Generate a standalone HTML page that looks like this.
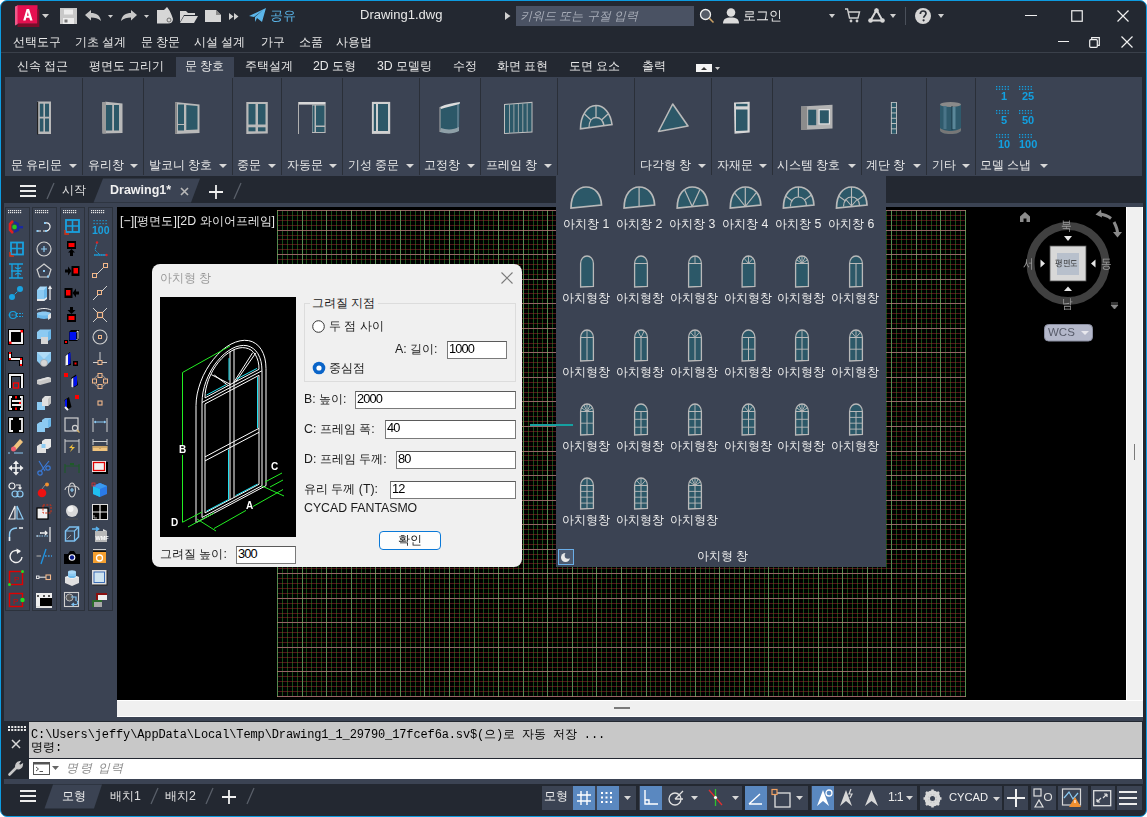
<!DOCTYPE html><html><head><meta charset='utf-8'><style>
*{margin:0;padding:0;box-sizing:border-box}
html,body{width:1147px;height:817px;overflow:hidden;background:#fff}
body{font-family:"Liberation Sans",sans-serif;font-size:12px;color:#e6e6e6;position:relative}
.a{position:absolute}
.t{position:absolute;white-space:pre;line-height:1}
#win{position:absolute;left:0;top:0;width:1147px;height:817px;background:#232831;border:1px solid #0d9be0;border-radius:7px;overflow:hidden}
svg{position:absolute;overflow:visible}
</style></head><body><div id='win'><div class='a' style='left:0px;top:51px;width:1146px;height:1px;background:#3a404a;'></div><div class='a' style='left:4px;top:76px;width:1137px;height:99px;background:#3b4353;'></div><div class='a' style='left:81px;top:77px;width:1px;height:97px;background:#2a2f38;'></div><div class='a' style='left:142px;top:77px;width:1px;height:97px;background:#2a2f38;'></div><div class='a' style='left:231px;top:77px;width:1px;height:97px;background:#2a2f38;'></div><div class='a' style='left:280px;top:77px;width:1px;height:97px;background:#2a2f38;'></div><div class='a' style='left:341px;top:77px;width:1px;height:97px;background:#2a2f38;'></div><div class='a' style='left:418px;top:77px;width:1px;height:97px;background:#2a2f38;'></div><div class='a' style='left:479px;top:77px;width:1px;height:97px;background:#2a2f38;'></div><div class='a' style='left:556px;top:77px;width:1px;height:97px;background:#2a2f38;'></div><div class='a' style='left:633px;top:77px;width:1px;height:97px;background:#2a2f38;'></div><div class='a' style='left:710px;top:77px;width:1px;height:97px;background:#2a2f38;'></div><div class='a' style='left:771px;top:77px;width:1px;height:97px;background:#2a2f38;'></div><div class='a' style='left:860px;top:77px;width:1px;height:97px;background:#2a2f38;'></div><div class='a' style='left:925px;top:77px;width:1px;height:97px;background:#2a2f38;'></div><div class='a' style='left:974px;top:77px;width:1px;height:97px;background:#2a2f38;'></div><div class='a' style='left:175px;top:56px;width:58px;height:20px;background:#3b4353;'></div><div class='a' style='left:3px;top:202px;width:1139px;height:518px;background:#3b4353;'></div><div class='a' style='left:4px;top:206px;width:25px;height:404px;background:#3b4353;border:1px solid #2c323c'></div><div class='a' style='left:31px;top:206px;width:25px;height:404px;background:#3b4353;border:1px solid #2c323c'></div><div class='a' style='left:59px;top:206px;width:25px;height:404px;background:#3b4353;border:1px solid #2c323c'></div><div class='a' style='left:87px;top:206px;width:25px;height:404px;background:#3b4353;border:1px solid #2c323c'></div><div class='a' style='left:116px;top:206px;width:1009px;height:493px;background:#000;'></div><div class='a' style='left:116px;top:699px;width:1026px;height:17px;background:#f0f0f0;border-top:1px solid #fff;border-bottom:1px solid #fff'></div><div class='a' style='left:1125px;top:206px;width:17px;height:493px;background:#f0f0f0;border-left:1px solid #fff;border-right:1px solid #fff'></div><div class='a' style='left:28px;top:721px;width:1113px;height:36px;background:#c8c8c8;'></div><div class='a' style='left:28px;top:758px;width:1113px;height:20px;background:#ffffff;'></div><div class='a' style='left:3px;top:778px;width:1139px;height:5px;background:#3b4353;'></div><svg style='left:-1px;top:-1px' width='1147' height='817' shape-rendering='crispEdges'><line x1='277' y1='696.5' x2='966' y2='696.5' stroke='#966464'/><line x1='277' y1='691.5' x2='966' y2='691.5' stroke='#501619'/><line x1='277' y1='686.5' x2='966' y2='686.5' stroke='#501619'/><line x1='277' y1='681.5' x2='966' y2='681.5' stroke='#501619'/><line x1='277' y1='676.5' x2='966' y2='676.5' stroke='#501619'/><line x1='277' y1='671.5' x2='966' y2='671.5' stroke='#966464'/><line x1='277' y1='667.5' x2='966' y2='667.5' stroke='#501619'/><line x1='277' y1='662.5' x2='966' y2='662.5' stroke='#501619'/><line x1='277' y1='657.5' x2='966' y2='657.5' stroke='#501619'/><line x1='277' y1='652.5' x2='966' y2='652.5' stroke='#501619'/><line x1='277' y1='647.5' x2='966' y2='647.5' stroke='#966464'/><line x1='277' y1='642.5' x2='966' y2='642.5' stroke='#501619'/><line x1='277' y1='637.5' x2='966' y2='637.5' stroke='#501619'/><line x1='277' y1='632.5' x2='966' y2='632.5' stroke='#501619'/><line x1='277' y1='627.5' x2='966' y2='627.5' stroke='#501619'/><line x1='277' y1='622.5' x2='966' y2='622.5' stroke='#966464'/><line x1='277' y1='617.5' x2='966' y2='617.5' stroke='#501619'/><line x1='277' y1='613.5' x2='966' y2='613.5' stroke='#501619'/><line x1='277' y1='608.5' x2='966' y2='608.5' stroke='#501619'/><line x1='277' y1='603.5' x2='966' y2='603.5' stroke='#501619'/><line x1='277' y1='598.5' x2='966' y2='598.5' stroke='#966464'/><line x1='277' y1='593.5' x2='966' y2='593.5' stroke='#501619'/><line x1='277' y1='588.5' x2='966' y2='588.5' stroke='#501619'/><line x1='277' y1='583.5' x2='966' y2='583.5' stroke='#501619'/><line x1='277' y1='578.5' x2='966' y2='578.5' stroke='#501619'/><line x1='277' y1='573.5' x2='966' y2='573.5' stroke='#966464'/><line x1='277' y1='568.5' x2='966' y2='568.5' stroke='#501619'/><line x1='277' y1='563.5' x2='966' y2='563.5' stroke='#501619'/><line x1='277' y1='559.5' x2='966' y2='559.5' stroke='#501619'/><line x1='277' y1='554.5' x2='966' y2='554.5' stroke='#501619'/><line x1='277' y1='549.5' x2='966' y2='549.5' stroke='#966464'/><line x1='277' y1='544.5' x2='966' y2='544.5' stroke='#501619'/><line x1='277' y1='539.5' x2='966' y2='539.5' stroke='#501619'/><line x1='277' y1='534.5' x2='966' y2='534.5' stroke='#501619'/><line x1='277' y1='529.5' x2='966' y2='529.5' stroke='#501619'/><line x1='277' y1='524.5' x2='966' y2='524.5' stroke='#966464'/><line x1='277' y1='519.5' x2='966' y2='519.5' stroke='#501619'/><line x1='277' y1='514.5' x2='966' y2='514.5' stroke='#501619'/><line x1='277' y1='509.5' x2='966' y2='509.5' stroke='#501619'/><line x1='277' y1='505.5' x2='966' y2='505.5' stroke='#501619'/><line x1='277' y1='500.5' x2='966' y2='500.5' stroke='#966464'/><line x1='277' y1='495.5' x2='966' y2='495.5' stroke='#501619'/><line x1='277' y1='490.5' x2='966' y2='490.5' stroke='#501619'/><line x1='277' y1='485.5' x2='966' y2='485.5' stroke='#501619'/><line x1='277' y1='480.5' x2='966' y2='480.5' stroke='#501619'/><line x1='277' y1='475.5' x2='966' y2='475.5' stroke='#966464'/><line x1='277' y1='470.5' x2='966' y2='470.5' stroke='#501619'/><line x1='277' y1='465.5' x2='966' y2='465.5' stroke='#501619'/><line x1='277' y1='460.5' x2='966' y2='460.5' stroke='#501619'/><line x1='277' y1='455.5' x2='966' y2='455.5' stroke='#501619'/><line x1='277' y1='451.5' x2='966' y2='451.5' stroke='#966464'/><line x1='277' y1='446.5' x2='966' y2='446.5' stroke='#501619'/><line x1='277' y1='441.5' x2='966' y2='441.5' stroke='#501619'/><line x1='277' y1='436.5' x2='966' y2='436.5' stroke='#501619'/><line x1='277' y1='431.5' x2='966' y2='431.5' stroke='#501619'/><line x1='277' y1='426.5' x2='966' y2='426.5' stroke='#966464'/><line x1='277' y1='421.5' x2='966' y2='421.5' stroke='#501619'/><line x1='277' y1='416.5' x2='966' y2='416.5' stroke='#501619'/><line x1='277' y1='411.5' x2='966' y2='411.5' stroke='#501619'/><line x1='277' y1='406.5' x2='966' y2='406.5' stroke='#501619'/><line x1='277' y1='401.5' x2='966' y2='401.5' stroke='#966464'/><line x1='277' y1='397.5' x2='966' y2='397.5' stroke='#501619'/><line x1='277' y1='392.5' x2='966' y2='392.5' stroke='#501619'/><line x1='277' y1='387.5' x2='966' y2='387.5' stroke='#501619'/><line x1='277' y1='382.5' x2='966' y2='382.5' stroke='#501619'/><line x1='277' y1='377.5' x2='966' y2='377.5' stroke='#966464'/><line x1='277' y1='372.5' x2='966' y2='372.5' stroke='#501619'/><line x1='277' y1='367.5' x2='966' y2='367.5' stroke='#501619'/><line x1='277' y1='362.5' x2='966' y2='362.5' stroke='#501619'/><line x1='277' y1='357.5' x2='966' y2='357.5' stroke='#501619'/><line x1='277' y1='352.5' x2='966' y2='352.5' stroke='#966464'/><line x1='277' y1='347.5' x2='966' y2='347.5' stroke='#501619'/><line x1='277' y1='343.5' x2='966' y2='343.5' stroke='#501619'/><line x1='277' y1='338.5' x2='966' y2='338.5' stroke='#501619'/><line x1='277' y1='333.5' x2='966' y2='333.5' stroke='#501619'/><line x1='277' y1='328.5' x2='966' y2='328.5' stroke='#966464'/><line x1='277' y1='323.5' x2='966' y2='323.5' stroke='#501619'/><line x1='277' y1='318.5' x2='966' y2='318.5' stroke='#501619'/><line x1='277' y1='313.5' x2='966' y2='313.5' stroke='#501619'/><line x1='277' y1='308.5' x2='966' y2='308.5' stroke='#501619'/><line x1='277' y1='303.5' x2='966' y2='303.5' stroke='#966464'/><line x1='277' y1='298.5' x2='966' y2='298.5' stroke='#501619'/><line x1='277' y1='293.5' x2='966' y2='293.5' stroke='#501619'/><line x1='277' y1='289.5' x2='966' y2='289.5' stroke='#501619'/><line x1='277' y1='284.5' x2='966' y2='284.5' stroke='#501619'/><line x1='277' y1='279.5' x2='966' y2='279.5' stroke='#966464'/><line x1='277' y1='274.5' x2='966' y2='274.5' stroke='#501619'/><line x1='277' y1='269.5' x2='966' y2='269.5' stroke='#501619'/><line x1='277' y1='264.5' x2='966' y2='264.5' stroke='#501619'/><line x1='277' y1='259.5' x2='966' y2='259.5' stroke='#501619'/><line x1='277' y1='254.5' x2='966' y2='254.5' stroke='#966464'/><line x1='277' y1='249.5' x2='966' y2='249.5' stroke='#501619'/><line x1='277' y1='244.5' x2='966' y2='244.5' stroke='#501619'/><line x1='277' y1='239.5' x2='966' y2='239.5' stroke='#501619'/><line x1='277' y1='235.5' x2='966' y2='235.5' stroke='#501619'/><line x1='277' y1='230.5' x2='966' y2='230.5' stroke='#966464'/><line x1='277' y1='225.5' x2='966' y2='225.5' stroke='#501619'/><line x1='277' y1='220.5' x2='966' y2='220.5' stroke='#501619'/><line x1='277' y1='215.5' x2='966' y2='215.5' stroke='#501619'/><line x1='277' y1='210.5' x2='966' y2='210.5' stroke='#966464'/></svg><svg style='left:-1px;top:-1px;mix-blend-mode:lighten' width='1147' height='817' shape-rendering='crispEdges'><line x1='277.5' y1='210' x2='277.5' y2='697' stroke='#558c50'/><line x1='282.5' y1='210' x2='282.5' y2='697' stroke='#184c18'/><line x1='287.5' y1='210' x2='287.5' y2='697' stroke='#184c18'/><line x1='292.5' y1='210' x2='292.5' y2='697' stroke='#184c18'/><line x1='297.5' y1='210' x2='297.5' y2='697' stroke='#184c18'/><line x1='302.5' y1='210' x2='302.5' y2='697' stroke='#558c50'/><line x1='306.5' y1='210' x2='306.5' y2='697' stroke='#184c18'/><line x1='311.5' y1='210' x2='311.5' y2='697' stroke='#184c18'/><line x1='316.5' y1='210' x2='316.5' y2='697' stroke='#184c18'/><line x1='321.5' y1='210' x2='321.5' y2='697' stroke='#184c18'/><line x1='326.5' y1='210' x2='326.5' y2='697' stroke='#558c50'/><line x1='331.5' y1='210' x2='331.5' y2='697' stroke='#184c18'/><line x1='336.5' y1='210' x2='336.5' y2='697' stroke='#184c18'/><line x1='341.5' y1='210' x2='341.5' y2='697' stroke='#184c18'/><line x1='346.5' y1='210' x2='346.5' y2='697' stroke='#184c18'/><line x1='351.5' y1='210' x2='351.5' y2='697' stroke='#558c50'/><line x1='356.5' y1='210' x2='356.5' y2='697' stroke='#184c18'/><line x1='361.5' y1='210' x2='361.5' y2='697' stroke='#184c18'/><line x1='365.5' y1='210' x2='365.5' y2='697' stroke='#184c18'/><line x1='370.5' y1='210' x2='370.5' y2='697' stroke='#184c18'/><line x1='375.5' y1='210' x2='375.5' y2='697' stroke='#558c50'/><line x1='380.5' y1='210' x2='380.5' y2='697' stroke='#184c18'/><line x1='385.5' y1='210' x2='385.5' y2='697' stroke='#184c18'/><line x1='390.5' y1='210' x2='390.5' y2='697' stroke='#184c18'/><line x1='395.5' y1='210' x2='395.5' y2='697' stroke='#184c18'/><line x1='400.5' y1='210' x2='400.5' y2='697' stroke='#558c50'/><line x1='405.5' y1='210' x2='405.5' y2='697' stroke='#184c18'/><line x1='410.5' y1='210' x2='410.5' y2='697' stroke='#184c18'/><line x1='415.5' y1='210' x2='415.5' y2='697' stroke='#184c18'/><line x1='420.5' y1='210' x2='420.5' y2='697' stroke='#184c18'/><line x1='424.5' y1='210' x2='424.5' y2='697' stroke='#558c50'/><line x1='429.5' y1='210' x2='429.5' y2='697' stroke='#184c18'/><line x1='434.5' y1='210' x2='434.5' y2='697' stroke='#184c18'/><line x1='439.5' y1='210' x2='439.5' y2='697' stroke='#184c18'/><line x1='444.5' y1='210' x2='444.5' y2='697' stroke='#184c18'/><line x1='449.5' y1='210' x2='449.5' y2='697' stroke='#558c50'/><line x1='454.5' y1='210' x2='454.5' y2='697' stroke='#184c18'/><line x1='459.5' y1='210' x2='459.5' y2='697' stroke='#184c18'/><line x1='464.5' y1='210' x2='464.5' y2='697' stroke='#184c18'/><line x1='469.5' y1='210' x2='469.5' y2='697' stroke='#184c18'/><line x1='474.5' y1='210' x2='474.5' y2='697' stroke='#558c50'/><line x1='478.5' y1='210' x2='478.5' y2='697' stroke='#184c18'/><line x1='483.5' y1='210' x2='483.5' y2='697' stroke='#184c18'/><line x1='488.5' y1='210' x2='488.5' y2='697' stroke='#184c18'/><line x1='493.5' y1='210' x2='493.5' y2='697' stroke='#184c18'/><line x1='498.5' y1='210' x2='498.5' y2='697' stroke='#558c50'/><line x1='503.5' y1='210' x2='503.5' y2='697' stroke='#184c18'/><line x1='508.5' y1='210' x2='508.5' y2='697' stroke='#184c18'/><line x1='513.5' y1='210' x2='513.5' y2='697' stroke='#184c18'/><line x1='518.5' y1='210' x2='518.5' y2='697' stroke='#184c18'/><line x1='523.5' y1='210' x2='523.5' y2='697' stroke='#558c50'/><line x1='528.5' y1='210' x2='528.5' y2='697' stroke='#184c18'/><line x1='533.5' y1='210' x2='533.5' y2='697' stroke='#184c18'/><line x1='537.5' y1='210' x2='537.5' y2='697' stroke='#184c18'/><line x1='542.5' y1='210' x2='542.5' y2='697' stroke='#184c18'/><line x1='547.5' y1='210' x2='547.5' y2='697' stroke='#558c50'/><line x1='552.5' y1='210' x2='552.5' y2='697' stroke='#184c18'/><line x1='557.5' y1='210' x2='557.5' y2='697' stroke='#184c18'/><line x1='562.5' y1='210' x2='562.5' y2='697' stroke='#184c18'/><line x1='567.5' y1='210' x2='567.5' y2='697' stroke='#184c18'/><line x1='572.5' y1='210' x2='572.5' y2='697' stroke='#558c50'/><line x1='577.5' y1='210' x2='577.5' y2='697' stroke='#184c18'/><line x1='582.5' y1='210' x2='582.5' y2='697' stroke='#184c18'/><line x1='587.5' y1='210' x2='587.5' y2='697' stroke='#184c18'/><line x1='592.5' y1='210' x2='592.5' y2='697' stroke='#184c18'/><line x1='596.5' y1='210' x2='596.5' y2='697' stroke='#558c50'/><line x1='601.5' y1='210' x2='601.5' y2='697' stroke='#184c18'/><line x1='606.5' y1='210' x2='606.5' y2='697' stroke='#184c18'/><line x1='611.5' y1='210' x2='611.5' y2='697' stroke='#184c18'/><line x1='616.5' y1='210' x2='616.5' y2='697' stroke='#184c18'/><line x1='621.5' y1='210' x2='621.5' y2='697' stroke='#558c50'/><line x1='626.5' y1='210' x2='626.5' y2='697' stroke='#184c18'/><line x1='631.5' y1='210' x2='631.5' y2='697' stroke='#184c18'/><line x1='636.5' y1='210' x2='636.5' y2='697' stroke='#184c18'/><line x1='641.5' y1='210' x2='641.5' y2='697' stroke='#184c18'/><line x1='646.5' y1='210' x2='646.5' y2='697' stroke='#558c50'/><line x1='650.5' y1='210' x2='650.5' y2='697' stroke='#184c18'/><line x1='655.5' y1='210' x2='655.5' y2='697' stroke='#184c18'/><line x1='660.5' y1='210' x2='660.5' y2='697' stroke='#184c18'/><line x1='665.5' y1='210' x2='665.5' y2='697' stroke='#184c18'/><line x1='670.5' y1='210' x2='670.5' y2='697' stroke='#558c50'/><line x1='675.5' y1='210' x2='675.5' y2='697' stroke='#184c18'/><line x1='680.5' y1='210' x2='680.5' y2='697' stroke='#184c18'/><line x1='685.5' y1='210' x2='685.5' y2='697' stroke='#184c18'/><line x1='690.5' y1='210' x2='690.5' y2='697' stroke='#184c18'/><line x1='695.5' y1='210' x2='695.5' y2='697' stroke='#558c50'/><line x1='700.5' y1='210' x2='700.5' y2='697' stroke='#184c18'/><line x1='705.5' y1='210' x2='705.5' y2='697' stroke='#184c18'/><line x1='709.5' y1='210' x2='709.5' y2='697' stroke='#184c18'/><line x1='714.5' y1='210' x2='714.5' y2='697' stroke='#184c18'/><line x1='719.5' y1='210' x2='719.5' y2='697' stroke='#558c50'/><line x1='724.5' y1='210' x2='724.5' y2='697' stroke='#184c18'/><line x1='729.5' y1='210' x2='729.5' y2='697' stroke='#184c18'/><line x1='734.5' y1='210' x2='734.5' y2='697' stroke='#184c18'/><line x1='739.5' y1='210' x2='739.5' y2='697' stroke='#184c18'/><line x1='744.5' y1='210' x2='744.5' y2='697' stroke='#558c50'/><line x1='749.5' y1='210' x2='749.5' y2='697' stroke='#184c18'/><line x1='754.5' y1='210' x2='754.5' y2='697' stroke='#184c18'/><line x1='759.5' y1='210' x2='759.5' y2='697' stroke='#184c18'/><line x1='764.5' y1='210' x2='764.5' y2='697' stroke='#184c18'/><line x1='768.5' y1='210' x2='768.5' y2='697' stroke='#558c50'/><line x1='773.5' y1='210' x2='773.5' y2='697' stroke='#184c18'/><line x1='778.5' y1='210' x2='778.5' y2='697' stroke='#184c18'/><line x1='783.5' y1='210' x2='783.5' y2='697' stroke='#184c18'/><line x1='788.5' y1='210' x2='788.5' y2='697' stroke='#184c18'/><line x1='793.5' y1='210' x2='793.5' y2='697' stroke='#558c50'/><line x1='798.5' y1='210' x2='798.5' y2='697' stroke='#184c18'/><line x1='803.5' y1='210' x2='803.5' y2='697' stroke='#184c18'/><line x1='808.5' y1='210' x2='808.5' y2='697' stroke='#184c18'/><line x1='813.5' y1='210' x2='813.5' y2='697' stroke='#184c18'/><line x1='818.5' y1='210' x2='818.5' y2='697' stroke='#558c50'/><line x1='822.5' y1='210' x2='822.5' y2='697' stroke='#184c18'/><line x1='827.5' y1='210' x2='827.5' y2='697' stroke='#184c18'/><line x1='832.5' y1='210' x2='832.5' y2='697' stroke='#184c18'/><line x1='837.5' y1='210' x2='837.5' y2='697' stroke='#184c18'/><line x1='842.5' y1='210' x2='842.5' y2='697' stroke='#558c50'/><line x1='847.5' y1='210' x2='847.5' y2='697' stroke='#184c18'/><line x1='852.5' y1='210' x2='852.5' y2='697' stroke='#184c18'/><line x1='857.5' y1='210' x2='857.5' y2='697' stroke='#184c18'/><line x1='862.5' y1='210' x2='862.5' y2='697' stroke='#184c18'/><line x1='867.5' y1='210' x2='867.5' y2='697' stroke='#558c50'/><line x1='872.5' y1='210' x2='872.5' y2='697' stroke='#184c18'/><line x1='877.5' y1='210' x2='877.5' y2='697' stroke='#184c18'/><line x1='881.5' y1='210' x2='881.5' y2='697' stroke='#184c18'/><line x1='886.5' y1='210' x2='886.5' y2='697' stroke='#184c18'/><line x1='891.5' y1='210' x2='891.5' y2='697' stroke='#558c50'/><line x1='896.5' y1='210' x2='896.5' y2='697' stroke='#184c18'/><line x1='901.5' y1='210' x2='901.5' y2='697' stroke='#184c18'/><line x1='906.5' y1='210' x2='906.5' y2='697' stroke='#184c18'/><line x1='911.5' y1='210' x2='911.5' y2='697' stroke='#184c18'/><line x1='916.5' y1='210' x2='916.5' y2='697' stroke='#558c50'/><line x1='921.5' y1='210' x2='921.5' y2='697' stroke='#184c18'/><line x1='926.5' y1='210' x2='926.5' y2='697' stroke='#184c18'/><line x1='931.5' y1='210' x2='931.5' y2='697' stroke='#184c18'/><line x1='936.5' y1='210' x2='936.5' y2='697' stroke='#184c18'/><line x1='940.5' y1='210' x2='940.5' y2='697' stroke='#558c50'/><line x1='945.5' y1='210' x2='945.5' y2='697' stroke='#184c18'/><line x1='950.5' y1='210' x2='950.5' y2='697' stroke='#184c18'/><line x1='955.5' y1='210' x2='955.5' y2='697' stroke='#184c18'/><line x1='960.5' y1='210' x2='960.5' y2='697' stroke='#184c18'/><line x1='965.5' y1='210' x2='965.5' y2='697' stroke='#558c50'/></svg><svg style='left:13px;top:3px;' width='27' height='24' viewBox='0 0 27 24'><path d='M1 2.5L4 1.2V20L1 21.5Z' fill='#ee5a8a'/><rect x='3.5' y='1.2' width='20' height='18.5' fill='#e51050'/><path d='M3.5 19.7H23.5V5L25.3 5.6V23H3.5Z' fill='#7c0c2a'/><path d='M9.2 16.5L12.6 5H15.1L18.6 16.5H16.1L15.3 13.8H12.3L11.6 16.5ZM12.9 11.7H14.8L13.85 8.1Z' fill='#fff'/></svg><svg style='left:41.0px;top:13.0px;' width='7' height='4' viewBox='0 0 7 4'><path d='M0 0H7L3.5 4Z' fill='#cfcfcf'/></svg><svg style='left:59px;top:7px;' width='17' height='16' viewBox='0 0 17 16'><path d='M0 0H17V16H0Z' fill='#c8c8c8'/><rect x='4' y='1.5' width='9' height='5' fill='#ececec'/><rect x='3' y='10' width='11' height='6' fill='#ececec'/><rect x='4.5' y='11.5' width='3' height='3' fill='#777'/></svg><svg style='left:83px;top:9px;' width='18' height='12' viewBox='0 0 18 12'><path d='M1 5L7 0V3C12 3 16 5 17 11C14 8 11 7.5 7 7.5V10.5Z' fill='#c8c8c8'/></svg><svg style='left:107.0px;top:13.5px;' width='5' height='3' viewBox='0 0 5 3'><path d='M0 0H5L2.5 3Z' fill='#cfcfcf'/></svg><svg style='left:119px;top:9px;' width='18' height='12' viewBox='0 0 18 12'><path d='M17 5L11 0V3C6 3 2 5 1 11C4 8 7 7.5 11 7.5V10.5Z' fill='#c8c8c8'/></svg><svg style='left:143.0px;top:13.5px;' width='5' height='3' viewBox='0 0 5 3'><path d='M0 0H5L2.5 3Z' fill='#cfcfcf'/></svg><svg style='left:155px;top:6px;' width='18' height='17' viewBox='0 0 18 17'><path d='M1 3H8L11 0C13 2 16 8 17 12C17 15 15 16.5 12 16.5H1Z' fill='#d6d6d6'/><circle cx='13' cy='13' r='2' fill='none' stroke='#555' stroke-width='0.8'/></svg><svg style='left:179px;top:9px;' width='18' height='13' viewBox='0 0 18 13'><path d='M0 1H6L8 3H15V5H4L0 12Z' fill='#d6d6d6'/><path d='M4 6H18L14 13H0Z' fill='#d6d6d6'/></svg><svg style='left:204px;top:9px;' width='16' height='12' viewBox='0 0 16 12'><path d='M0 0H11L16 5V12H0Z' fill='#d6d6d6'/><path d='M11 0V5H16' fill='#8a8a8a'/></svg><svg style='left:228px;top:12px;' width='10' height='7' viewBox='0 0 10 7'><path d='M0 0L4.5 3.5L0 7ZM5 0L9.5 3.5L5 7Z' fill='#d0d0d0'/></svg><svg style='left:248px;top:7px;' width='17' height='15' viewBox='0 0 17 15'><path d='M0 8L17 0L13 14L8 10L6 14V9L14 2L5 9Z' fill='#5bb6ea'/></svg><div class='t' style='left:269px;top:9px;font-size:12.5px;color:#5bb6ea;'>공유</div><div class='t' style='left:359px;top:7px;font-size:13px;color:#e8e8e8;'>Drawing1.dwg</div><svg style='left:504px;top:11px;' width='6' height='8' viewBox='0 0 6 8'><path d='M0 0L5.5 4L0 8Z' fill='#d0d0d0'/></svg><div class='a' style='left:515px;top:5px;width:178px;height:20px;background:#4a5263;'></div><div class='t' style='left:519px;top:9px;font-size:12px;color:#a8adb8;font-style:italic'>키워드 또는 구절 입력</div><svg style='left:698px;top:7px;' width='16' height='16' viewBox='0 0 16 16'><circle cx='6.5' cy='6.5' r='5' fill='#555b67' stroke='#f0f0f0' stroke-width='1.3'/><path d='M10.3 10.3L14.5 14.5' stroke='#c9a064' stroke-width='1.6'/></svg><svg style='left:721px;top:6px;' width='18' height='17' viewBox='0 0 18 17'><circle cx='9' cy='5.5' r='4.3' fill='#dcdcdc'/><path d='M1 16.5C1 12 4 10.5 9 10.5C14 10.5 17 12 17 16.5Z' fill='#dcdcdc'/></svg><div class='t' style='left:742px;top:9px;font-size:12.5px;color:#eaeaea;'>로그인</div><svg style='left:827.5px;top:13.0px;' width='6' height='4' viewBox='0 0 6 4'><path d='M0 0H6L3.0 4Z' fill='#cfcfcf'/></svg><svg style='left:844px;top:7px;' width='15' height='15' viewBox='0 0 15 15'><path d='M0 1H2.5L4.5 10H13L14.5 4H3.5' fill='none' stroke='#cfcfcf' stroke-width='1.4'/><circle cx='6' cy='13' r='1.4' fill='#cfcfcf'/><circle cx='12' cy='13' r='1.4' fill='#cfcfcf'/></svg><svg style='left:867px;top:7px;' width='17' height='15' viewBox='0 0 17 15'><path d='M8.5 2L2.5 12.5H14.5Z' fill='none' stroke='#d6d6d6' stroke-width='2'/><circle cx='8.5' cy='2.5' r='2.3' fill='#d6d6d6'/><circle cx='2.5' cy='12.5' r='2.3' fill='#d6d6d6'/><circle cx='14.5' cy='12.5' r='2.3' fill='#d6d6d6'/></svg><svg style='left:888.5px;top:13.0px;' width='6' height='4' viewBox='0 0 6 4'><path d='M0 0H6L3.0 4Z' fill='#cfcfcf'/></svg><div class='a' style='left:904px;top:6px;width:1px;height:18px;background:#4a505a;'></div><svg style='left:913px;top:6px;' width='18' height='18' viewBox='0 0 18 18'><circle cx='9' cy='9' r='8' fill='#d6d6d6'/><path d='M6.3 7C6.3 5 7.5 4 9.1 4C10.8 4 12 5 12 6.5C12 8.5 9.7 8.7 9.7 10.8' fill='none' stroke='#2a2e36' stroke-width='1.7'/><circle cx='9.6' cy='13.3' r='1.1' fill='#2a2e36'/></svg><svg style='left:936.5px;top:13.0px;' width='6' height='4' viewBox='0 0 6 4'><path d='M0 0H6L3.0 4Z' fill='#cfcfcf'/></svg><div class='a' style='left:1024px;top:14px;width:12px;height:1px;background:#f0f0f0;'></div><svg style='left:1070px;top:9px;' width='12' height='12' viewBox='0 0 12 12'><rect x='0.75' y='0.75' width='10.5' height='10.5' fill='none' stroke='#f0f0f0' stroke-width='1.2'/></svg><svg style='left:1116px;top:9px;' width='12' height='12' viewBox='0 0 12 12'><path d='M0.5 0.5L11.5 11.5M11.5 0.5L0.5 11.5' stroke='#f0f0f0' stroke-width='1.2'/></svg><div class='a' style='left:1057px;top:40px;width:11px;height:1px;background:#f0f0f0;'></div><svg style='left:1088px;top:36px;' width='11' height='11' viewBox='0 0 11 11'><rect x='0.7' y='2.7' width='7.6' height='7.6' rx='1' fill='none' stroke='#f0f0f0' stroke-width='1.2'/><path d='M2.7 2.7V0.7H10.3V8.3H8.3' fill='none' stroke='#f0f0f0' stroke-width='1.2'/></svg><svg style='left:1120px;top:35px;' width='12' height='12' viewBox='0 0 12 12'><path d='M0.5 0.5L11.5 11.5M11.5 0.5L0.5 11.5' stroke='#f0f0f0' stroke-width='1.2'/></svg><div class='t' style='left:12px;top:35px;font-size:12.3px;color:#e8e8e8;'>선택도구</div><div class='t' style='left:74px;top:35px;font-size:12.3px;color:#e8e8e8;'>기초 설계</div><div class='t' style='left:140px;top:35px;font-size:12.3px;color:#e8e8e8;'>문 창문</div><div class='t' style='left:193px;top:35px;font-size:12.3px;color:#e8e8e8;'>시설 설계</div><div class='t' style='left:260px;top:35px;font-size:12.3px;color:#e8e8e8;'>가구</div><div class='t' style='left:298px;top:35px;font-size:12.3px;color:#e8e8e8;'>소품</div><div class='t' style='left:335px;top:35px;font-size:12.3px;color:#e8e8e8;'>사용법</div><div class='t' style='left:16px;top:59px;font-size:12.3px;color:#e8e8e8;'>신속 접근</div><div class='t' style='left:88px;top:59px;font-size:12.3px;color:#e8e8e8;'>평면도 그리기</div><div class='t' style='left:184px;top:59px;font-size:12.3px;color:#e8e8e8;'>문 창호</div><div class='t' style='left:244px;top:59px;font-size:12.3px;color:#e8e8e8;'>주택설계</div><div class='t' style='left:312px;top:59px;font-size:12.3px;color:#e8e8e8;'>2D 도형</div><div class='t' style='left:376px;top:59px;font-size:12.3px;color:#e8e8e8;'>3D 모델링</div><div class='t' style='left:452px;top:59px;font-size:12.3px;color:#e8e8e8;'>수정</div><div class='t' style='left:496px;top:59px;font-size:12.3px;color:#e8e8e8;'>화면 표현</div><div class='t' style='left:568px;top:59px;font-size:12.3px;color:#e8e8e8;'>도면 요소</div><div class='t' style='left:641px;top:59px;font-size:12.3px;color:#e8e8e8;'>출력</div><svg style='left:695px;top:63px;' width='16' height='8' viewBox='0 0 16 8'><rect x='0' y='0' width='16' height='8' fill='#f4f4f4'/><path d='M5 6H11L8 3Z' fill='#333'/></svg><svg style='left:714.0px;top:65.5px;' width='5' height='3' viewBox='0 0 5 3'><path d='M0 0H5L2.5 3Z' fill='#cfcfcf'/></svg><div class='t' style='left:10px;top:158px;font-size:12.3px;color:#e8e8e8;'>문 유리문</div><svg style='left:67.5px;top:163.0px;' width='8' height='4' viewBox='0 0 8 4'><path d='M0 0H8L4.0 4Z' fill='#d8d8d8'/></svg><div class='t' style='left:87px;top:158px;font-size:12.3px;color:#e8e8e8;'>유리창</div><svg style='left:129.0px;top:163.0px;' width='8' height='4' viewBox='0 0 8 4'><path d='M0 0H8L4.0 4Z' fill='#d8d8d8'/></svg><div class='t' style='left:148px;top:158px;font-size:12.3px;color:#e8e8e8;'>발코니 창호</div><svg style='left:217.5px;top:163.0px;' width='8' height='4' viewBox='0 0 8 4'><path d='M0 0H8L4.0 4Z' fill='#d8d8d8'/></svg><div class='t' style='left:236px;top:158px;font-size:12.3px;color:#e8e8e8;'>중문</div><svg style='left:267.0px;top:163.0px;' width='8' height='4' viewBox='0 0 8 4'><path d='M0 0H8L4.0 4Z' fill='#d8d8d8'/></svg><div class='t' style='left:286px;top:158px;font-size:12.3px;color:#e8e8e8;'>자동문</div><svg style='left:328.0px;top:163.0px;' width='8' height='4' viewBox='0 0 8 4'><path d='M0 0H8L4.0 4Z' fill='#d8d8d8'/></svg><div class='t' style='left:347px;top:158px;font-size:12.3px;color:#e8e8e8;'>기성 중문</div><svg style='left:405.0px;top:163.0px;' width='8' height='4' viewBox='0 0 8 4'><path d='M0 0H8L4.0 4Z' fill='#d8d8d8'/></svg><div class='t' style='left:423px;top:158px;font-size:12.3px;color:#e8e8e8;'>고정창</div><svg style='left:466.0px;top:163.0px;' width='8' height='4' viewBox='0 0 8 4'><path d='M0 0H8L4.0 4Z' fill='#d8d8d8'/></svg><div class='t' style='left:485px;top:158px;font-size:12.3px;color:#e8e8e8;'>프레임 창</div><svg style='left:543.0px;top:163.0px;' width='8' height='4' viewBox='0 0 8 4'><path d='M0 0H8L4.0 4Z' fill='#d8d8d8'/></svg><div class='t' style='left:639px;top:158px;font-size:12.3px;color:#e8e8e8;'>다각형 창</div><svg style='left:696.5px;top:163.0px;' width='8' height='4' viewBox='0 0 8 4'><path d='M0 0H8L4.0 4Z' fill='#d8d8d8'/></svg><div class='t' style='left:716px;top:158px;font-size:12.3px;color:#e8e8e8;'>자재문</div><svg style='left:758.0px;top:163.0px;' width='8' height='4' viewBox='0 0 8 4'><path d='M0 0H8L4.0 4Z' fill='#d8d8d8'/></svg><div class='t' style='left:776px;top:158px;font-size:12.3px;color:#e8e8e8;'>시스템 창호</div><svg style='left:847.0px;top:163.0px;' width='8' height='4' viewBox='0 0 8 4'><path d='M0 0H8L4.0 4Z' fill='#d8d8d8'/></svg><div class='t' style='left:865px;top:158px;font-size:12.3px;color:#e8e8e8;'>계단 창</div><svg style='left:912.0px;top:163.0px;' width='8' height='4' viewBox='0 0 8 4'><path d='M0 0H8L4.0 4Z' fill='#d8d8d8'/></svg><div class='t' style='left:931px;top:158px;font-size:12.3px;color:#e8e8e8;'>기타</div><svg style='left:961.0px;top:163.0px;' width='8' height='4' viewBox='0 0 8 4'><path d='M0 0H8L4.0 4Z' fill='#d8d8d8'/></svg><div class='t' style='left:979px;top:158px;font-size:12.3px;color:#e8e8e8;'>모델 스냅</div><svg style='left:1038.5px;top:163.0px;' width='8' height='4' viewBox='0 0 8 4'><path d='M0 0H8L4.0 4Z' fill='#d8d8d8'/></svg><svg style='left:36px;top:100px;' width='15' height='34' viewBox='0 0 15 34'><rect x='0.5' y='0.5' width='13.5' height='32.5' fill='#b9b9b9'/><path d='M0 1V33.5H1.2V1Z' fill='#222'/><rect x='2.8' y='2.7' width='3.6' height='13' fill='#2c5868'/><rect x='8' y='2.7' width='4' height='13' fill='#2c5868'/><rect x='2.8' y='17.5' width='3.6' height='13' fill='#2c5868'/><rect x='8' y='17.5' width='4' height='13' fill='#2c5868'/></svg><svg style='left:100px;top:100px;' width='23' height='34' viewBox='0 0 23 34'><path d='M1 1.5L5 0.8L21.5 2.5V32L1.5 32.5Z' fill='#b9b9b9'/><path d='M1 1.5L5 0.8V32.5H1.5Z' fill='#9a9a9a'/><rect x='5' y='4' width='6.2' height='25.5' fill='#2c5868'/><rect x='13' y='4' width='5' height='25.5' fill='#2c5868'/></svg><svg style='left:174px;top:100px;' width='26' height='34' viewBox='0 0 26 34'><path d='M0.2 1L24.5 3.5V32L0.2 33Z' fill='#b9b9b9'/><path d='M0.2 1L2 1.5V32.5L0.2 33Z' fill='#888'/><path d='M3 3.5H9V23H3Z' fill='#2c5868'/><path d='M3 24H9V29.5H3Z' fill='#2c5868'/><path d='M11.3 4L22.5 5V28.5L11.3 29Z' fill='#2c5868'/></svg><svg style='left:245px;top:100px;' width='23' height='34' viewBox='0 0 23 34'><path d='M0.3 1H21.8V32.5L0.3 33Z' fill='#b9b9b9'/><rect x='2.5' y='3' width='7' height='20.5' fill='#2c5868'/><rect x='12' y='3' width='7.5' height='20.5' fill='#2c5868'/><rect x='2.5' y='26.3' width='7' height='4' fill='#2c5868'/><rect x='12' y='26.3' width='7.5' height='4' fill='#2c5868'/></svg><svg style='left:296px;top:100px;' width='30' height='34' viewBox='0 0 30 34'><rect x='1' y='1' width='27.6' height='2.6' fill='#d8d8d8'/><rect x='1' y='1' width='1' height='32' fill='#b0b0b0'/><rect x='15' y='3.5' width='13.6' height='28.5' fill='#b9b9b9'/><rect x='19' y='4.5' width='8.5' height='20' fill='#2c5868'/><rect x='19' y='26' width='8.5' height='5' fill='#2c5868'/><rect x='15.5' y='4.5' width='2' height='26.5' fill='#2c5868'/></svg><svg style='left:370px;top:100px;' width='20' height='34' viewBox='0 0 20 34'><rect x='0.9' y='0.9' width='18.3' height='32' fill='#d0d0d0'/><rect x='7' y='3' width='10' height='27' fill='#2c5868'/><rect x='2.8' y='3' width='2.2' height='27' fill='#2c5868'/></svg><svg style='left:437px;top:100px;' width='23' height='34' viewBox='0 0 23 34'><path d='M2 6C8 3 16 2 22 1L21 30C16 32 8 33 2 31Z' fill='#2c5868'/><path d='M2 6C8 3 16 2 22 1L21.5 3C16 5 8 6 3 8Z' fill='#dcdcdc'/><path d='M3 27C8 29 16 29 21 26L21 30C16 33 8 33 2 31Z' fill='#8fa0a8'/><path d='M2 6V31' stroke='#aaa' stroke-width='1'/><path d='M20 3V27' stroke='#9ab' stroke-width='0.8'/></svg><svg style='left:502px;top:100px;' width='31' height='34' viewBox='0 0 31 34'><path d='M1 3L29.5 0.8V31.5L1 33Z' fill='#bfbfbf'/><path d='M2 4L28.5 2V30.5L2 32Z' fill='#2c5868'/><path d='M6.5 3.7V31.8' stroke='#b5b5b5' stroke-width='0.8'/><path d='M10.9 3.3V31.5' stroke='#b5b5b5' stroke-width='0.8'/><path d='M15.4 3.0V31.2' stroke='#b5b5b5' stroke-width='0.8'/><path d='M19.8 2.7V31.0' stroke='#b5b5b5' stroke-width='0.8'/><path d='M24.2 2.3V30.8' stroke='#b5b5b5' stroke-width='0.8'/></svg><svg style='left:578px;top:103px;' width='35' height='26' viewBox='0 0 35 26'><path d='M1.5 24.8C1.5 12 8 1.5 17 1.5C25 1.5 31.5 9 33 20.5Z' fill='#2c5868' stroke='#b9b9b9' stroke-width='1.6'/><path d='M10 23.5C10 17 13 13.5 17 13.5C21 13.5 24 16.5 25 21.5' fill='none' stroke='#b9b9b9' stroke-width='1.3'/><path d='M17 1.5V13.5M5.5 10L12 16M29 10L22.5 16' stroke='#b9b9b9' stroke-width='1.3'/></svg><svg style='left:656px;top:101px;' width='33' height='31' viewBox='0 0 33 31'><path d='M15.7 2L31 24L1.5 29.5Z' fill='#2c5868' stroke='#b9b9b9' stroke-width='1.6' stroke-linejoin='round'/></svg><svg style='left:732px;top:100px;' width='18' height='34' viewBox='0 0 18 34'><path d='M1 1.5L16.7 0.7V31.5L1.5 32.8Z' fill='#d6d6d6'/><rect x='3' y='2.8' width='11.5' height='2.5' fill='#2c5868'/><path d='M3 8.5H14.5V29.5L3 30Z' fill='#2c5868'/></svg><svg style='left:799px;top:103px;' width='34' height='27' viewBox='0 0 34 27'><path d='M1 2.5L32.5 0.8V24.5L1 26Z' fill='#b3b3b3'/><path d='M1 2.5H7V26H1Z' fill='#8c8c8c'/><rect x='8.2' y='5.7' width='8' height='15.5' fill='#2c5868'/><rect x='18.5' y='5' width='11.5' height='15.5' fill='#e0e0e0'/><rect x='19.8' y='6.3' width='9' height='13' fill='#2c5868'/></svg><svg style='left:889px;top:100px;' width='8' height='34' viewBox='0 0 8 34'><rect x='0.9' y='1' width='6' height='32' fill='#c8c8c8'/><rect x='1.8' y='1.8' width='4.2' height='4.4' fill='#2c5868'/><rect x='1.8' y='7.1' width='4.2' height='4.4' fill='#2c5868'/><rect x='1.8' y='12.4' width='4.2' height='4.4' fill='#2c5868'/><rect x='1.8' y='17.7' width='4.2' height='4.4' fill='#2c5868'/><rect x='1.8' y='23.0' width='4.2' height='4.4' fill='#2c5868'/><rect x='1.8' y='28.3' width='4.2' height='4.4' fill='#2c5868'/></svg><svg style='left:938px;top:100px;' width='24' height='34' viewBox='0 0 24 34'><path d='M1 3.5V29C1 31.5 5.5 33 11.5 33C17.5 33 22 31.5 22 29V3.5Z' fill='#2f5a6c'/><ellipse cx='11.5' cy='3.5' rx='10.5' ry='2.6' fill='#8a8a8a'/><path d='M1 27C3 29 8 30 11.5 30C15 30 20 29 22 27V29C22 31.5 17.5 33 11.5 33C5.5 33 1 31.5 1 29Z' fill='#777'/><path d='M6 5V28' stroke='#4a7488' stroke-width='3'/><path d='M13 5V29' stroke='#1c3846' stroke-width='1'/><path d='M15 6V28' stroke='#5b8799' stroke-width='3'/></svg><svg style='left:995px;top:85px;' width='14' height='52' viewBox='0 0 14 52'><rect x='0.0' y='0.0' width='1.3' height='1.3' fill='#12a0e0'/><rect x='2.9' y='0.0' width='1.3' height='1.3' fill='#12a0e0'/><rect x='5.8' y='0.0' width='1.3' height='1.3' fill='#12a0e0'/><rect x='8.7' y='0.0' width='1.3' height='1.3' fill='#12a0e0'/><rect x='11.6' y='0.0' width='1.3' height='1.3' fill='#12a0e0'/><rect x='0.0' y='2.6' width='1.3' height='1.3' fill='#12a0e0'/><rect x='2.9' y='2.6' width='1.3' height='1.3' fill='#12a0e0'/><rect x='5.8' y='2.6' width='1.3' height='1.3' fill='#12a0e0'/><rect x='8.7' y='2.6' width='1.3' height='1.3' fill='#12a0e0'/><rect x='11.6' y='2.6' width='1.3' height='1.3' fill='#12a0e0'/><rect x='0.0' y='24.0' width='1.3' height='1.3' fill='#12a0e0'/><rect x='2.9' y='24.0' width='1.3' height='1.3' fill='#12a0e0'/><rect x='5.8' y='24.0' width='1.3' height='1.3' fill='#12a0e0'/><rect x='8.7' y='24.0' width='1.3' height='1.3' fill='#12a0e0'/><rect x='11.6' y='24.0' width='1.3' height='1.3' fill='#12a0e0'/><rect x='0.0' y='26.6' width='1.3' height='1.3' fill='#12a0e0'/><rect x='2.9' y='26.6' width='1.3' height='1.3' fill='#12a0e0'/><rect x='5.8' y='26.6' width='1.3' height='1.3' fill='#12a0e0'/><rect x='8.7' y='26.6' width='1.3' height='1.3' fill='#12a0e0'/><rect x='11.6' y='26.6' width='1.3' height='1.3' fill='#12a0e0'/><rect x='0.0' y='48.0' width='1.3' height='1.3' fill='#12a0e0'/><rect x='2.9' y='48.0' width='1.3' height='1.3' fill='#12a0e0'/><rect x='5.8' y='48.0' width='1.3' height='1.3' fill='#12a0e0'/><rect x='8.7' y='48.0' width='1.3' height='1.3' fill='#12a0e0'/><rect x='11.6' y='48.0' width='1.3' height='1.3' fill='#12a0e0'/><rect x='0.0' y='50.6' width='1.3' height='1.3' fill='#12a0e0'/><rect x='2.9' y='50.6' width='1.3' height='1.3' fill='#12a0e0'/><rect x='5.8' y='50.6' width='1.3' height='1.3' fill='#12a0e0'/><rect x='8.7' y='50.6' width='1.3' height='1.3' fill='#12a0e0'/><rect x='11.6' y='50.6' width='1.3' height='1.3' fill='#12a0e0'/></svg><svg style='left:1018px;top:85px;' width='14' height='52' viewBox='0 0 14 52'><rect x='0.0' y='0.0' width='1.3' height='1.3' fill='#12a0e0'/><rect x='2.9' y='0.0' width='1.3' height='1.3' fill='#12a0e0'/><rect x='5.8' y='0.0' width='1.3' height='1.3' fill='#12a0e0'/><rect x='8.7' y='0.0' width='1.3' height='1.3' fill='#12a0e0'/><rect x='11.6' y='0.0' width='1.3' height='1.3' fill='#12a0e0'/><rect x='0.0' y='2.6' width='1.3' height='1.3' fill='#12a0e0'/><rect x='2.9' y='2.6' width='1.3' height='1.3' fill='#12a0e0'/><rect x='5.8' y='2.6' width='1.3' height='1.3' fill='#12a0e0'/><rect x='8.7' y='2.6' width='1.3' height='1.3' fill='#12a0e0'/><rect x='11.6' y='2.6' width='1.3' height='1.3' fill='#12a0e0'/><rect x='0.0' y='24.0' width='1.3' height='1.3' fill='#12a0e0'/><rect x='2.9' y='24.0' width='1.3' height='1.3' fill='#12a0e0'/><rect x='5.8' y='24.0' width='1.3' height='1.3' fill='#12a0e0'/><rect x='8.7' y='24.0' width='1.3' height='1.3' fill='#12a0e0'/><rect x='11.6' y='24.0' width='1.3' height='1.3' fill='#12a0e0'/><rect x='0.0' y='26.6' width='1.3' height='1.3' fill='#12a0e0'/><rect x='2.9' y='26.6' width='1.3' height='1.3' fill='#12a0e0'/><rect x='5.8' y='26.6' width='1.3' height='1.3' fill='#12a0e0'/><rect x='8.7' y='26.6' width='1.3' height='1.3' fill='#12a0e0'/><rect x='11.6' y='26.6' width='1.3' height='1.3' fill='#12a0e0'/><rect x='0.0' y='48.0' width='1.3' height='1.3' fill='#12a0e0'/><rect x='2.9' y='48.0' width='1.3' height='1.3' fill='#12a0e0'/><rect x='5.8' y='48.0' width='1.3' height='1.3' fill='#12a0e0'/><rect x='8.7' y='48.0' width='1.3' height='1.3' fill='#12a0e0'/><rect x='11.6' y='48.0' width='1.3' height='1.3' fill='#12a0e0'/><rect x='0.0' y='50.6' width='1.3' height='1.3' fill='#12a0e0'/><rect x='2.9' y='50.6' width='1.3' height='1.3' fill='#12a0e0'/><rect x='5.8' y='50.6' width='1.3' height='1.3' fill='#12a0e0'/><rect x='8.7' y='50.6' width='1.3' height='1.3' fill='#12a0e0'/><rect x='11.6' y='50.6' width='1.3' height='1.3' fill='#12a0e0'/></svg><div class='t' style='left:1000px;top:90px;font-size:11px;color:#12a0e0;font-weight:bold'>1</div><div class='t' style='left:1021px;top:90px;font-size:11px;color:#12a0e0;font-weight:bold'>25</div><div class='t' style='left:1000px;top:114px;font-size:11px;color:#12a0e0;font-weight:bold'>5</div><div class='t' style='left:1021px;top:114px;font-size:11px;color:#12a0e0;font-weight:bold'>50</div><div class='t' style='left:997px;top:138px;font-size:11px;color:#12a0e0;font-weight:bold'>10</div><div class='t' style='left:1018px;top:138px;font-size:11px;color:#12a0e0;font-weight:bold'>100</div><div class='a' style='left:19px;top:184px;width:16px;height:2px;background:#ececec;'></div><div class='a' style='left:19px;top:189px;width:16px;height:2px;background:#ececec;'></div><div class='a' style='left:19px;top:194px;width:16px;height:2px;background:#ececec;'></div><svg style='left:45px;top:181px;' width='9' height='18' viewBox='0 0 9 18'><path d='M1 17L8 1' stroke='#5a606a' stroke-width='1.2'/></svg><div class='t' style='left:61px;top:183px;font-size:12.3px;color:#e0e0e0;'>시작</div><svg style='left:92px;top:177px;' width='108' height='25' viewBox='0 0 108 25'><path d='M0.5 24.5L10 0.5H107L98 24.5Z' fill='#3b4353'/></svg><div class='t' style='left:109px;top:183px;font-size:12.5px;color:#f0f0f0;font-weight:bold'>Drawing1*</div><svg style='left:179px;top:186px;' width='9' height='9' viewBox='0 0 9 9'><path d='M1 1L8 8M8 1L1 8' stroke='#b8b8b8' stroke-width='1.6'/></svg><svg style='left:207px;top:183px;' width='16' height='16' viewBox='0 0 16 16'><path d='M8 1V15M1 8H15' stroke='#f0f0f0' stroke-width='1.8'/></svg><svg style='left:232px;top:181px;' width='9' height='18' viewBox='0 0 9 18'><path d='M1 17L8 1' stroke='#5a606a' stroke-width='1.2'/></svg><svg style='left:7px;top:209px;' width='14' height='4' viewBox='0 0 14 4'><rect x='0' y='0' width='1.2' height='1.2' fill='#e6e6e6'/><rect x='2' y='0' width='1.2' height='1.2' fill='#e6e6e6'/><rect x='4' y='0' width='1.2' height='1.2' fill='#e6e6e6'/><rect x='6' y='0' width='1.2' height='1.2' fill='#e6e6e6'/><rect x='8' y='0' width='1.2' height='1.2' fill='#e6e6e6'/><rect x='10' y='0' width='1.2' height='1.2' fill='#e6e6e6'/><rect x='12' y='0' width='1.2' height='1.2' fill='#e6e6e6'/><rect x='0' y='2' width='1.2' height='1.2' fill='#e6e6e6'/><rect x='2' y='2' width='1.2' height='1.2' fill='#e6e6e6'/><rect x='4' y='2' width='1.2' height='1.2' fill='#e6e6e6'/><rect x='6' y='2' width='1.2' height='1.2' fill='#e6e6e6'/><rect x='8' y='2' width='1.2' height='1.2' fill='#e6e6e6'/><rect x='10' y='2' width='1.2' height='1.2' fill='#e6e6e6'/><rect x='12' y='2' width='1.2' height='1.2' fill='#e6e6e6'/></svg><svg style='left:7px;top:218px;' width='16' height='16' viewBox='0 0 16 16'><path d='M5 2L2 5V11L5 14' fill='none' stroke='#e02020' stroke-width='2.5'/><path d='M6 3L10 5V11L6 13' fill='none' stroke='#1a2aa0' stroke-width='2.2'/><rect x='10' y='7' width='5' height='2.4' fill='#1a2aa0'/><circle cx='6.5' cy='8' r='2.3' fill='#22cc22'/></svg><svg style='left:7px;top:240px;' width='16' height='16' viewBox='0 0 16 16'><rect x='3' y='1.5' width='12' height='12' fill='none' stroke='#19a2e0' stroke-width='1.8'/><path d='M9 1.5V13.5M3 7.5H15' stroke='#19a2e0' stroke-width='1.6'/><path d='M2 11V15H6' fill='none' stroke='#e03010' stroke-width='1.4'/></svg><svg style='left:7px;top:262px;' width='16' height='16' viewBox='0 0 16 16'><path d='M1 1H15M1 15H15M4 1V15M10 1V15M3 8H14M7 4.5L10 6L13 4.5M7 11.5L10 10L13 11.5' fill='none' stroke='#19a2e0' stroke-width='1.3'/></svg><svg style='left:7px;top:284px;' width='16' height='16' viewBox='0 0 16 16'><circle cx='4' cy='12' r='3' fill='#19a2e0'/><circle cx='12' cy='4' r='3' fill='#19a2e0'/><path d='M6.5 9.5L9.5 6.5' stroke='#19a2e0' stroke-width='1'/></svg><svg style='left:7px;top:306px;' width='16' height='16' viewBox='0 0 16 16'><circle cx='5' cy='8' r='3.5' fill='none' stroke='#19a2e0' stroke-width='1.2'/><path d='M0.5 8H9M8 6.5H15M8 9.5H15' stroke='#19a2e0' stroke-width='1' stroke-dasharray='2 1'/></svg><svg style='left:7px;top:328px;' width='16' height='16' viewBox='0 0 16 16'><rect x='0' y='0' width='16' height='16' fill='#000'/><rect x='2' y='2' width='12' height='12' fill='none' stroke='#f0f0f0' stroke-width='2'/><rect x='12.5' y='1' width='2.5' height='2.5' fill='#ff0000'/><rect x='1' y='12.5' width='2.5' height='2.5' fill='#ff0000'/></svg><svg style='left:7px;top:350px;' width='16' height='16' viewBox='0 0 16 16'><path d='M2 1V8H13V15' fill='none' stroke='#000' stroke-width='4'/><path d='M2 1V8H13V15' fill='none' stroke='#f0f0f0' stroke-width='2'/><rect x='1' y='1' width='2' height='2' fill='#ff0000'/><rect x='12' y='13' width='2' height='2' fill='#ff0000'/><rect x='1' y='7' width='2' height='2' fill='#ff0000'/><rect x='12' y='7' width='2' height='2' fill='#ff0000'/></svg><svg style='left:7px;top:372px;' width='16' height='16' viewBox='0 0 16 16'><path d='M2 15V2H14V15' fill='none' stroke='#000' stroke-width='4'/><path d='M2 15V2H14V15' fill='none' stroke='#f0f0f0' stroke-width='2'/><rect x='5.5' y='10' width='5' height='5' fill='none' stroke='#ff0000' stroke-width='1.3'/></svg><svg style='left:7px;top:394px;' width='16' height='16' viewBox='0 0 16 16'><rect x='0' y='0' width='16' height='16' fill='#000'/><path d='M4 2H2V14H4M12 2H14V14H12M4 6H12V10H4' fill='none' stroke='#f0f0f0' stroke-width='1.8'/><rect x='7' y='1' width='2' height='2.5' fill='#ff0000'/><rect x='7' y='12.5' width='2' height='2.5' fill='#ff0000'/><rect x='11' y='7' width='2' height='2' fill='#ff0000'/></svg><svg style='left:7px;top:416px;' width='16' height='16' viewBox='0 0 16 16'><rect x='0' y='0' width='16' height='16' fill='#000'/><path d='M5 2H2V14H5M11 2H14V14H11' fill='none' stroke='#f0f0f0' stroke-width='1.8'/></svg><svg style='left:7px;top:437px;' width='16' height='16' viewBox='0 0 16 16'><path d='M12 1L15 4L8 12L5 9Z' fill='#f0c47e'/><circle cx='5.5' cy='11' r='2.5' fill='#f06070'/><path d='M0 15H2M6 15H15' stroke='#8ccaf2' stroke-width='1'/></svg><svg style='left:7px;top:459px;' width='16' height='16' viewBox='0 0 16 16'><path d='M8 0.5L11 4H5ZM8 15.5L11 12H5ZM0.5 8L4 5V11ZM15.5 8L12 5V11Z' fill='#f0f0f0'/><path d='M8 3V13M3 8H13' stroke='#f0f0f0' stroke-width='1.6'/></svg><svg style='left:7px;top:481px;' width='16' height='16' viewBox='0 0 16 16'><circle cx='4' cy='4' r='3' fill='none' stroke='#f0f0f0' stroke-width='1.2'/><path d='M8 3H12V7M10.5 5.5L12 7L13.5 5.5' fill='none' stroke='#f0f0f0' stroke-width='1.2'/><circle cx='7' cy='12' r='3' fill='none' stroke='#8ccaf2' stroke-width='1.2'/><circle cx='12' cy='12' r='3' fill='none' stroke='#8ccaf2' stroke-width='1.2'/></svg><svg style='left:7px;top:503px;' width='16' height='16' viewBox='0 0 16 16'><path d='M1 15L7 2V15Z' fill='none' stroke='#f0f0f0' stroke-width='1.2'/><path d='M9 2L15 15H9Z' fill='none' stroke='#8ccaf2' stroke-width='1.2'/></svg><svg style='left:7px;top:525px;' width='16' height='16' viewBox='0 0 16 16'><path d='M1.5 15V9C1.5 5 4 2 9 2' fill='none' stroke='#8ccaf2' stroke-width='1.4'/><path d='M1.5 11V15M11 2H15' stroke='#f0f0f0' stroke-width='1.4'/></svg><svg style='left:7px;top:547px;' width='16' height='16' viewBox='0 0 16 16'><path d='M12 4A6 6 0 1 0 14 9' fill='none' stroke='#f0f0f0' stroke-width='1.4'/><path d='M8.5 0.5L13 3L9 6Z' fill='#f0f0f0'/></svg><svg style='left:7px;top:569px;' width='16' height='16' viewBox='0 0 16 16'><rect x='1.5' y='1.5' width='13' height='13' fill='none' stroke='#e00000' stroke-width='1.4'/><text x='6' y='12' font-size='8' fill='#e00000' font-family='Liberation Sans'>P</text><circle cx='14.5' cy='1.5' r='1.5' fill='#22dd22'/><circle cx='1.5' cy='14.5' r='1.5' fill='#22dd22'/></svg><svg style='left:7px;top:591px;' width='16' height='16' viewBox='0 0 16 16'><rect x='1.5' y='1.5' width='13' height='13' fill='none' stroke='#e00000' stroke-width='1.4'/><text x='5' y='12' font-size='8' fill='#e00000' font-family='Liberation Sans'>P</text><circle cx='14.5' cy='8' r='2.2' fill='#22dd22'/></svg><svg style='left:34px;top:209px;' width='14' height='4' viewBox='0 0 14 4'><rect x='0' y='0' width='1.2' height='1.2' fill='#e6e6e6'/><rect x='2' y='0' width='1.2' height='1.2' fill='#e6e6e6'/><rect x='4' y='0' width='1.2' height='1.2' fill='#e6e6e6'/><rect x='6' y='0' width='1.2' height='1.2' fill='#e6e6e6'/><rect x='8' y='0' width='1.2' height='1.2' fill='#e6e6e6'/><rect x='10' y='0' width='1.2' height='1.2' fill='#e6e6e6'/><rect x='12' y='0' width='1.2' height='1.2' fill='#e6e6e6'/><rect x='0' y='2' width='1.2' height='1.2' fill='#e6e6e6'/><rect x='2' y='2' width='1.2' height='1.2' fill='#e6e6e6'/><rect x='4' y='2' width='1.2' height='1.2' fill='#e6e6e6'/><rect x='6' y='2' width='1.2' height='1.2' fill='#e6e6e6'/><rect x='8' y='2' width='1.2' height='1.2' fill='#e6e6e6'/><rect x='10' y='2' width='1.2' height='1.2' fill='#e6e6e6'/><rect x='12' y='2' width='1.2' height='1.2' fill='#e6e6e6'/></svg><svg style='left:35px;top:218px;' width='16' height='16' viewBox='0 0 16 16'><path d='M1 12H5M7 12H11' stroke='#f0f0f0' stroke-width='1.2'/><path d='M9.5 4C13 3.5 14.5 6 14 8.5C13.5 11 11 12 10 12' fill='none' stroke='#f0f0f0' stroke-width='1.2'/><rect x='0.5' y='11' width='2' height='2' fill='#8ccaf2'/><rect x='9' y='11' width='2' height='2' fill='#8ccaf2'/><rect x='8' y='3' width='2' height='2' fill='#8ccaf2'/></svg><svg style='left:35px;top:240px;' width='16' height='16' viewBox='0 0 16 16'><circle cx='8' cy='8' r='7' fill='none' stroke='#d0d0d0' stroke-width='1.2'/><path d='M8 5V11M5 8H11' stroke='#8ccaf2' stroke-width='1.2'/></svg><svg style='left:35px;top:262px;' width='16' height='16' viewBox='0 0 16 16'><path d='M8 1L15 6.5L12.5 14H3.5L1 6.5Z' fill='none' stroke='#d0d0d0' stroke-width='1.2'/><rect x='7' y='7' width='2' height='2' fill='#8ccaf2'/><rect x='11' y='12.5' width='2' height='2' fill='#8ccaf2'/></svg><svg style='left:35px;top:284px;' width='16' height='16' viewBox='0 0 16 16'><path d='M1 5L4 1.5H11V13L8 16H1Z' fill='#a8d8f8'/><path d='M1 5H8V16H1Z' fill='#8ccaf2'/><path d='M8 5L11 1.5V13L8 16Z' fill='#6cb8ea'/><path d='M1 14H8L11 12V14L8 16H1Z' fill='#e8e8e8'/><path d='M14 15V2M12.5 4L14 1.5L15.5 4' fill='none' stroke='#f0f0f0' stroke-width='1.2'/></svg><svg style='left:35px;top:306px;' width='16' height='16' viewBox='0 0 16 16'><path d='M1 6C5 4 11 4 15 6V11C11 9 5 9 1 11Z' fill='#8ccaf2'/><path d='M1 10C5 12.5 11 12.5 15 10V7C11 9 5 9 1 7Z' fill='#6cb8ea'/><path d='M1 3C5 1 11 1 15 3' fill='none' stroke='#f0f0f0' stroke-width='1'/><path d='M12 8L15 6V11L12 13Z' fill='#e0e0e0'/></svg><svg style='left:35px;top:328px;' width='16' height='16' viewBox='0 0 16 16'><path d='M1 3L4 0.5H15V8L12 10H1Z' fill='#8ccaf2'/><rect x='5' y='8' width='7' height='7' fill='#d6d6d6'/><path d='M12 3L15 0.5V10L12 12Z' fill='#6cb8ea'/></svg><svg style='left:35px;top:350px;' width='16' height='16' viewBox='0 0 16 16'><path d='M1 1H15V10L11 14H5L1 10Z' fill='#8ccaf2'/><path d='M1 1L8 8L15 1Z' fill='#b0dcf8'/><circle cx='8' cy='12' r='3.5' fill='#d6d6d6' stroke='#999' stroke-width='0.5'/></svg><svg style='left:35px;top:372px;' width='16' height='16' viewBox='0 0 16 16'><path d='M1 7L12 4L15 5V9L4 12L1 11Z' fill='#c8c8c8'/><path d='M1 7L12 4L15 5L4 8Z' fill='#e0e0e0'/></svg><svg style='left:35px;top:394px;' width='16' height='16' viewBox='0 0 16 16'><path d='M1 7H9V15H1Z' fill='#8ccaf2'/><path d='M6 4L9 1H15V8L12 11H6Z' fill='#e0e0e0'/><path d='M12 4L15 1V8L12 11Z' fill='#c0c0c0'/></svg><svg style='left:35px;top:416px;' width='16' height='16' viewBox='0 0 16 16'><path d='M1 7L4 5H9V15H1Z' fill='#8ccaf2'/><path d='M6 3L9 1H15V9L12 11H6Z' fill='#8ccaf2'/><path d='M12 3L15 1V9L12 11Z' fill='#6cb8ea'/></svg><svg style='left:35px;top:437px;' width='16' height='16' viewBox='0 0 16 16'><path d='M1 8L4 6H10V15H1Z' fill='#e0e0e0'/><path d='M6 3L9 1H15V9L12 11H6Z' fill='#e8e8e8'/><rect x='5.5' y='6' width='4' height='4' fill='#8ccaf2'/></svg><svg style='left:35px;top:459px;' width='16' height='16' viewBox='0 0 16 16'><path d='M3 1L9 11M13 1L5 11' stroke='#3a7ad8' stroke-width='1.2'/><circle cx='4' cy='13' r='2.2' fill='none' stroke='#3a7ad8' stroke-width='1.2'/><circle cx='12' cy='8' r='2.2' fill='none' stroke='#3a7ad8' stroke-width='1.2'/></svg><svg style='left:35px;top:481px;' width='16' height='16' viewBox='0 0 16 16'><circle cx='6' cy='11' r='4.3' fill='#ee1111'/><path d='M6 7L9 3' stroke='#888' stroke-width='1'/><circle cx='11' cy='2.5' r='2' fill='#f09030'/></svg><svg style='left:35px;top:503px;' width='16' height='16' viewBox='0 0 16 16'><rect x='1' y='4' width='11' height='11' fill='#f0f0f0' stroke='#000' stroke-width='1.2'/><rect x='7' y='1' width='8' height='8' fill='none' stroke='#e03010' stroke-width='1' stroke-dasharray='2 1.3'/></svg><svg style='left:35px;top:525px;' width='16' height='16' viewBox='0 0 16 16'><path d='M4 7H11M9 5L11 7L9 9' fill='none' stroke='#f0f0f0' stroke-width='1.3'/><path d='M0.5 10H2.5M4 7H5' stroke='#f0f0f0' stroke-width='1'/><path d='M0.5 10H12' stroke='#8ccaf2' stroke-width='1' stroke-dasharray='1.5 1'/><path d='M14 1V16' stroke='#f0f0f0' stroke-width='1.2'/></svg><svg style='left:35px;top:547px;' width='16' height='16' viewBox='0 0 16 16'><path d='M0.5 8H5' stroke='#999' stroke-width='1.3'/><path d='M9 8H16' stroke='#3a9ae0' stroke-width='1.3' stroke-dasharray='1.6 1.4'/><path d='M10 1L5 16' stroke='#1e96e6' stroke-width='1.3'/></svg><svg style='left:35px;top:569px;' width='16' height='16' viewBox='0 0 16 16'><rect x='0.5' y='6' width='2.5' height='2.5' fill='none' stroke='#f0f0f0' stroke-width='0.9'/><path d='M3 7.2H10' stroke='#f0f0f0' stroke-width='1'/><rect x='10' y='5' width='4.5' height='4.5' fill='none' stroke='#f2b88a' stroke-width='1.1'/></svg><svg style='left:35px;top:591px;' width='16' height='16' viewBox='0 0 16 16'><rect x='0' y='1' width='16' height='15' fill='#eee'/><rect x='4' y='6' width='12' height='9' fill='#000'/><rect x='0' y='14' width='16' height='1.5' fill='#ddd'/><rect x='1' y='3' width='2' height='2' fill='#555'/><rect x='7' y='3' width='2' height='2' fill='#555'/><rect x='12' y='3' width='2' height='2' fill='#555'/></svg><svg style='left:62px;top:209px;' width='14' height='4' viewBox='0 0 14 4'><rect x='0' y='0' width='1.2' height='1.2' fill='#e6e6e6'/><rect x='2' y='0' width='1.2' height='1.2' fill='#e6e6e6'/><rect x='4' y='0' width='1.2' height='1.2' fill='#e6e6e6'/><rect x='6' y='0' width='1.2' height='1.2' fill='#e6e6e6'/><rect x='8' y='0' width='1.2' height='1.2' fill='#e6e6e6'/><rect x='10' y='0' width='1.2' height='1.2' fill='#e6e6e6'/><rect x='12' y='0' width='1.2' height='1.2' fill='#e6e6e6'/><rect x='0' y='2' width='1.2' height='1.2' fill='#e6e6e6'/><rect x='2' y='2' width='1.2' height='1.2' fill='#e6e6e6'/><rect x='4' y='2' width='1.2' height='1.2' fill='#e6e6e6'/><rect x='6' y='2' width='1.2' height='1.2' fill='#e6e6e6'/><rect x='8' y='2' width='1.2' height='1.2' fill='#e6e6e6'/><rect x='10' y='2' width='1.2' height='1.2' fill='#e6e6e6'/><rect x='12' y='2' width='1.2' height='1.2' fill='#e6e6e6'/></svg><svg style='left:63px;top:218px;' width='16' height='16' viewBox='0 0 16 16'><rect x='2' y='1' width='13' height='12' fill='none' stroke='#19a2e0' stroke-width='1.8'/><path d='M8.5 1V13M2 7H15' stroke='#19a2e0' stroke-width='1.6'/><path d='M1 11V15H5' fill='none' stroke='#e03010' stroke-width='1.3'/></svg><svg style='left:63px;top:240px;' width='16' height='16' viewBox='0 0 16 16'><rect x='3' y='0' width='9' height='8' fill='#000'/><rect x='4.5' y='2' width='6' height='4' fill='#ff0000'/><path d='M7.5 8L11 11.5H9V15H6V11.5H4Z' fill='#000'/></svg><svg style='left:63px;top:262px;' width='16' height='16' viewBox='0 0 16 16'><path d='M1 6.5H4V3.5L7.5 8L4 12.5V9.5H1Z' fill='#000'/><rect x='7.5' y='3' width='8' height='10' fill='#000'/><rect x='9.5' y='5' width='4.5' height='5.5' fill='#ff0000'/></svg><svg style='left:63px;top:284px;' width='16' height='16' viewBox='0 0 16 16'><rect x='0.5' y='3' width='8' height='10' fill='#000'/><rect x='2' y='5' width='4.5' height='5.5' fill='#ff0000'/><path d='M15 6.5H12V3.5L8.5 8L12 12.5V9.5H15Z' fill='#000'/></svg><svg style='left:63px;top:306px;' width='16' height='16' viewBox='0 0 16 16'><path d='M6 0H9V3H11.5L7.5 7L3.5 3H6Z' fill='#000'/><rect x='3' y='7' width='9' height='8' fill='#000'/><rect x='4.5' y='9' width='6' height='4' fill='#ff0000'/></svg><svg style='left:63px;top:328px;' width='16' height='16' viewBox='0 0 16 16'><path d='M5 3L7 1H15V10L13 12H5Z' fill='#000'/><rect x='5.5' y='3' width='7' height='8' fill='#0010ee'/><path d='M12.5 3L14 2V9.5L12.5 11' stroke='#f0f0f0' stroke-width='1'/><rect x='0' y='11' width='4' height='4' fill='#000'/><rect x='1' y='12' width='2' height='2' fill='#ff0000'/></svg><svg style='left:63px;top:350px;' width='16' height='16' viewBox='0 0 16 16'><path d='M1 5L6 1L7 14L2 15Z' fill='#000'/><path d='M1.5 5L4 3V14L1.5 14.5Z' fill='#f0f0f0'/><path d='M4 3L6.5 1.5V12.5L4 14Z' fill='#0010ee'/><rect x='9' y='10' width='5' height='5' fill='#000'/><rect x='10.5' y='11.5' width='2' height='2' fill='#ff0000'/></svg><svg style='left:63px;top:372px;' width='16' height='16' viewBox='0 0 16 16'><rect x='0' y='0' width='4' height='4' fill='#ff0000'/><path d='M7 5L12 1.5L14 12L9 15Z' fill='#000'/><path d='M7.5 6L9.5 4.5V14.5L7.5 14Z' fill='#f0f0f0'/><path d='M9.5 4.5L13 2.5V12L9.5 14Z' fill='#0010ee'/></svg><svg style='left:63px;top:394px;' width='16' height='16' viewBox='0 0 16 16'><path d='M0.5 5L5 2L7.5 12L3 15Z' fill='#000'/><path d='M1 5L3 4V14.5L1 14Z' fill='#0010ee'/><path d='M1 12L4 15' stroke='#f0f0f0' stroke-width='2'/><rect x='11' y='0' width='4' height='4' fill='#ff0000'/></svg><svg style='left:63px;top:416px;' width='16' height='16' viewBox='0 0 16 16'><rect x='1' y='1' width='13' height='13' fill='none' stroke='#d0d0d0' stroke-width='1.2'/><circle cx='11' cy='11' r='2.6' fill='#3b4353' stroke='#d0d0d0' stroke-width='1.1'/><path d='M13 13L15.5 15.5' stroke='#d8b060' stroke-width='1.1'/></svg><svg style='left:63px;top:437px;' width='16' height='16' viewBox='0 0 16 16'><path d='M1 1V15M15 1V15M1 3H15' stroke='#d0d0d0' stroke-width='1'/><path d='M9 6L5 10H8L6 14L11 9H8Z' fill='#f0c040'/></svg><svg style='left:63px;top:459px;' width='16' height='16' viewBox='0 0 16 16'><path d='M1 4V13M15 4V13M1 6H15' stroke='#1e5a28' stroke-width='1.2'/><rect x='6' y='3' width='4' height='2' fill='#1e5a28'/></svg><svg style='left:63px;top:481px;' width='16' height='16' viewBox='0 0 16 16'><ellipse cx='8' cy='8' rx='3.5' ry='7' fill='none' stroke='#d0d0d0' stroke-width='1.1'/><path d='M1 8C1 5 4 4 8 4C12 4 15 5 15 8' fill='none' stroke='#d0d0d0' stroke-width='1.1'/><path d='M8 6V10M6 8H10' stroke='#8ccaf2' stroke-width='1.2'/></svg><svg style='left:63px;top:503px;' width='16' height='16' viewBox='0 0 16 16'><circle cx='8' cy='7' r='6' fill='#d8d8d8'/><circle cx='6.5' cy='5' r='3' fill='#f4f4f4'/><path d='M2 15H14' stroke='#555' stroke-width='0.8'/></svg><svg style='left:63px;top:525px;' width='16' height='16' viewBox='0 0 16 16'><path d='M1.5 5L5.5 1H14.5V11L10.5 15H1.5Z' fill='none' stroke='#7cc0f0' stroke-width='1.5'/><path d='M1.5 5H10.5V15M10.5 5L14.5 1' fill='none' stroke='#7cc0f0' stroke-width='1.2'/><path d='M3 13L7 9' stroke='#aaa' stroke-width='0.8'/></svg><svg style='left:63px;top:547px;' width='16' height='16' viewBox='0 0 16 16'><path d='M0 6H4L6 3H10L12 6H16V16H0Z' fill='#000'/><circle cx='8' cy='9.5' r='3.3' fill='#fff'/><circle cx='8' cy='9.5' r='2.2' fill='#0a1a8a'/></svg><svg style='left:63px;top:569px;' width='16' height='16' viewBox='0 0 16 16'><path d='M1 7L8 5L15 7V13L8 16L1 13Z' fill='#e0e0e0'/><path d='M1 7L8 9L15 7L8 5Z' fill='#f4f4f4'/><ellipse cx='8' cy='6' rx='4' ry='2' fill='#6cb8ea'/><path d='M4 2V6H12V2' fill='#8ccaf2'/><ellipse cx='8' cy='2' rx='4' ry='1.8' fill='#a8d8f8'/></svg><svg style='left:63px;top:591px;' width='16' height='16' viewBox='0 0 16 16'><rect x='0.5' y='0.5' width='14' height='14' fill='none' stroke='#d0d0d0' stroke-width='1.1'/><circle cx='5.5' cy='5.5' r='3.5' fill='#555' stroke='#d0d0d0' stroke-width='0.8'/><path d='M7 5H12V9M10 11L8 12.5L10 14M8 12.5H12C14 12.5 14.5 10 13 9' fill='none' stroke='#7cc0f0' stroke-width='1.2'/></svg><svg style='left:90px;top:209px;' width='14' height='4' viewBox='0 0 14 4'><rect x='0' y='0' width='1.2' height='1.2' fill='#e6e6e6'/><rect x='2' y='0' width='1.2' height='1.2' fill='#e6e6e6'/><rect x='4' y='0' width='1.2' height='1.2' fill='#e6e6e6'/><rect x='6' y='0' width='1.2' height='1.2' fill='#e6e6e6'/><rect x='8' y='0' width='1.2' height='1.2' fill='#e6e6e6'/><rect x='10' y='0' width='1.2' height='1.2' fill='#e6e6e6'/><rect x='12' y='0' width='1.2' height='1.2' fill='#e6e6e6'/><rect x='0' y='2' width='1.2' height='1.2' fill='#e6e6e6'/><rect x='2' y='2' width='1.2' height='1.2' fill='#e6e6e6'/><rect x='4' y='2' width='1.2' height='1.2' fill='#e6e6e6'/><rect x='6' y='2' width='1.2' height='1.2' fill='#e6e6e6'/><rect x='8' y='2' width='1.2' height='1.2' fill='#e6e6e6'/><rect x='10' y='2' width='1.2' height='1.2' fill='#e6e6e6'/><rect x='12' y='2' width='1.2' height='1.2' fill='#e6e6e6'/></svg><svg style='left:91px;top:218px;' width='16' height='16' viewBox='0 0 16 16'><text x='0' y='15' font-size='10.5' font-weight='bold' fill='#19a2e0' font-family='Liberation Sans'>100</text><rect x='1.5' y='1' width='1.2' height='1.2' fill='#19a2e0'/><rect x='4.5' y='1' width='1.2' height='1.2' fill='#19a2e0'/><rect x='7.5' y='1' width='1.2' height='1.2' fill='#19a2e0'/><rect x='10.5' y='1' width='1.2' height='1.2' fill='#19a2e0'/><rect x='13.5' y='1' width='1.2' height='1.2' fill='#19a2e0'/><rect x='1.5' y='4' width='1.2' height='1.2' fill='#19a2e0'/><rect x='4.5' y='4' width='1.2' height='1.2' fill='#19a2e0'/><rect x='7.5' y='4' width='1.2' height='1.2' fill='#19a2e0'/><rect x='10.5' y='4' width='1.2' height='1.2' fill='#19a2e0'/><rect x='13.5' y='4' width='1.2' height='1.2' fill='#19a2e0'/></svg><svg style='left:91px;top:240px;' width='16' height='16' viewBox='0 0 16 16'><path d='M5 2L3 9L8 14M2 14H14' fill='none' stroke='#19a2e0' stroke-width='1' stroke-dasharray='1.5 0.8'/><path d='M2 14H14' stroke='#19a2e0' stroke-width='1'/><circle cx='5' cy='1.5' r='1.2' fill='#e02020'/><circle cx='14.5' cy='14' r='1.2' fill='#e02020'/></svg><svg style='left:91px;top:262px;' width='16' height='16' viewBox='0 0 16 16'><path d='M3 13L13 3' stroke='#d0d0d0' stroke-width='1'/><rect x='0.5' y='10.5' width='4' height='4' fill='#3b4353' stroke='#f2b88a' stroke-width='1'/><rect x='11.5' y='0.5' width='4' height='4' fill='#3b4353' stroke='#f2b88a' stroke-width='1'/></svg><svg style='left:91px;top:284px;' width='16' height='16' viewBox='0 0 16 16'><path d='M1 15L15 1' stroke='#d0d0d0' stroke-width='1'/><rect x='5.5' y='5.5' width='4' height='4' fill='#3b4353' stroke='#f2b88a' stroke-width='1'/></svg><svg style='left:91px;top:306px;' width='16' height='16' viewBox='0 0 16 16'><path d='M1 1L15 15M15 1L1 15' stroke='#d0d0d0' stroke-width='1'/><rect x='5.5' y='5.5' width='5' height='5' fill='#3b4353' stroke='#f2b88a' stroke-width='1.2'/></svg><svg style='left:91px;top:328px;' width='16' height='16' viewBox='0 0 16 16'><circle cx='8' cy='8' r='7' fill='none' stroke='#d0d0d0' stroke-width='1.1'/><rect x='6.5' y='6.5' width='3' height='3' fill='none' stroke='#f2b88a' stroke-width='1'/></svg><svg style='left:91px;top:350px;' width='16' height='16' viewBox='0 0 16 16'><path d='M8 1V12M1 11.5H15' stroke='#d0d0d0' stroke-width='1'/><rect x='6' y='9.5' width='4' height='4' fill='#3b4353' stroke='#f2b88a' stroke-width='1'/></svg><svg style='left:91px;top:372px;' width='16' height='16' viewBox='0 0 16 16'><circle cx='8' cy='8' r='6' fill='none' stroke='#999' stroke-width='1'/><rect x='6' y='0.5' width='4' height='4' fill='#3b4353' stroke='#f2b88a' stroke-width='1'/><rect x='6' y='11.5' width='4' height='4' fill='#3b4353' stroke='#f2b88a' stroke-width='1'/><rect x='0.5' y='6' width='4' height='4' fill='#3b4353' stroke='#f2b88a' stroke-width='1'/><rect x='11.5' y='6' width='4' height='4' fill='#3b4353' stroke='#f2b88a' stroke-width='1'/></svg><svg style='left:91px;top:394px;' width='16' height='16' viewBox='0 0 16 16'><rect x='6' y='6' width='4' height='4' fill='none' stroke='#f2b88a' stroke-width='1.1'/></svg><svg style='left:91px;top:416px;' width='16' height='16' viewBox='0 0 16 16'><path d='M1 1V15M15 1V15' stroke='#d0d0d0' stroke-width='1'/><path d='M2 5H14' stroke='#8ccaf2' stroke-width='1'/><path d='M2 5L4 3.5V6.5ZM14 5L12 3.5V6.5Z' fill='#8ccaf2'/></svg><svg style='left:91px;top:437px;' width='16' height='16' viewBox='0 0 16 16'><path d='M1 1V7M15 1V7M1 3.5H15' stroke='#d0d0d0' stroke-width='1'/><rect x='0.5' y='8' width='15' height='5' fill='#f0c47e'/><path d='M2 8V10M4 8V10M6 8V10M8 8V11M10 8V10M12 8V10M14 8V10' stroke='#7a5a30' stroke-width='0.6'/></svg><svg style='left:91px;top:459px;' width='16' height='16' viewBox='0 0 16 16'><rect x='1' y='2' width='15' height='12' fill='#000'/><rect x='0' y='1' width='14' height='11' fill='#f0f0f0'/><rect x='1.5' y='2.5' width='11' height='8' fill='none' stroke='#e00000' stroke-width='1.3'/></svg><svg style='left:91px;top:481px;' width='16' height='16' viewBox='0 0 16 16'><path d='M8 1L15 4V12L8 15L1 12V4Z' fill='#2a7ae8'/><path d='M1 4L8 7L15 4L8 1Z' fill='#3a9af0'/><path d='M8 7V15L1 12V4Z' fill='#20c0f0'/><rect x='0' y='1' width='3' height='3' fill='none' stroke='#e03030' stroke-width='0.8'/></svg><svg style='left:91px;top:503px;' width='16' height='16' viewBox='0 0 16 16'><rect x='0.5' y='0.5' width='15' height='15' fill='#000' stroke='#ddd' stroke-width='1'/><path d='M8 1V15M1 8H15' stroke='#eee' stroke-width='1.2'/><path d='M2 11V14H5' fill='none' stroke='#ccc' stroke-width='0.8'/></svg><svg style='left:91px;top:525px;' width='16' height='16' viewBox='0 0 16 16'><path d='M3 5H15V16H3Z' fill='#b8b8b8'/><path d='M11 3L15 5H11Z' fill='#ddd'/><text x='3.5' y='13.5' font-size='5.5' font-weight='bold' fill='#fff' font-family='Liberation Sans'>WMF</text><path d='M0 3H6M4 1L6.5 3L4 5' fill='none' stroke='#5ab4f0' stroke-width='1.6'/></svg><svg style='left:91px;top:547px;' width='16' height='16' viewBox='0 0 16 16'><rect x='1' y='1' width='13' height='5' fill='#111'/><rect x='1' y='4' width='13' height='11' fill='#f5a030'/><circle cx='7.5' cy='10' r='3' fill='none' stroke='#fff' stroke-width='1.3'/><rect x='1' y='1' width='13' height='1.2' fill='#ccc'/></svg><svg style='left:91px;top:569px;' width='16' height='16' viewBox='0 0 16 16'><rect x='0.5' y='0.5' width='15' height='15' fill='#222'/><rect x='0' y='0' width='14.5' height='14.5' fill='#ddd'/><rect x='2' y='2' width='10.5' height='10.5' fill='#cfe4f0' stroke='#2a60b0' stroke-width='0.9'/></svg><svg style='left:91px;top:591px;' width='16' height='16' viewBox='0 0 16 16'><rect x='4' y='1' width='11' height='7' fill='#8a1010'/><rect x='6' y='3' width='9' height='5' fill='#f0f0f0'/><rect x='0' y='8' width='10' height='7' fill='#2a6a2a'/><rect x='2' y='10' width='8' height='5' fill='#a8a8a8'/></svg><div class='t' style='left:119px;top:214px;font-size:12.35px;color:#e6e6e6;'>[−][평면도][2D 와이어프레임]</div><svg style='left:1014px;top:204px;' width='115' height='140' viewBox='0 0 115 140'><path d='M5 17V11.5L10 7L15 11.5V17H11.5V13.5H8.5V17Z' fill='#8c8c8c'/><circle cx='53' cy='58.5' r='37.5' fill='none' stroke='#404040' stroke-width='8'/><path d='M84 9C89 9.5 93 11 96 13.5' fill='none' stroke='#8a8a8a' stroke-width='3'/><path d='M86 4.5L80.5 9.5L87 12.5Z' fill='#8a8a8a'/><path d='M99 17C101 21 102.5 25 102.5 28' fill='none' stroke='#8a8a8a' stroke-width='3'/><path d='M98 27H107L102.5 32.5Z' fill='#8a8a8a'/><rect x='35' y='41' width='36' height='35' fill='#d8d8d8' stroke='#555' stroke-width='0.8'/><rect x='42' y='48' width='22' height='22' fill='#b8c0cc'/><path d='M49 31H57L53 36Z' fill='#e6e6e6'/><path d='M49 86H57L53 81.5Z' fill='#e6e6e6'/><path d='M25.5 54.5V62.5L30 58.5Z' fill='#e6e6e6'/><path d='M80.5 54.5V62.5L76 58.5Z' fill='#e6e6e6'/><path d='M96 100H103L99.5 104Z M96 98H103' fill='#8a8a8a' stroke='#8a8a8a' stroke-width='0.8'/></svg><div class='t' style='left:1060px;top:218px;font-size:13px;color:#9a9a9a;transform:scaleX(0.82);transform-origin:left'>북</div><div class='t' style='left:1061px;top:296px;font-size:13px;color:#9a9a9a;transform:scaleX(0.82);transform-origin:left'>남</div><div class='t' style='left:1022px;top:256px;font-size:13px;color:#9a9a9a;transform:scaleX(0.82);transform-origin:left'>서</div><div class='t' style='left:1100px;top:256px;font-size:13px;color:#9a9a9a;transform:scaleX(0.82);transform-origin:left'>동</div><div class='t' style='left:1054px;top:258px;font-size:8.5px;color:#2a2a2a;transform:scaleX(0.85);transform-origin:left'>평면도</div><svg style='left:1043px;top:323px;' width='49' height='18' viewBox='0 0 49 18'><rect x='0.5' y='0.5' width='48' height='16.5' rx='4' fill='#b4b8ca' stroke='#8a8ea0' stroke-width='1'/><path d='M37 7H45L41 11Z' fill='#e8e8ee'/></svg><div class='t' style='left:1047px;top:326px;font-size:11.5px;color:#585c6a;'>WCS</div><div class='a' style='left:1133px;top:443px;width:1px;height:16px;background:#7a7a7a;'></div><div class='a' style='left:613px;top:706px;width:16px;height:1.5px;background:#7a7a7a;'></div><div class='a' style='left:151px;top:263px;width:370px;height:303px;background:#f0f0f0;border-radius:8px'></div><div class='t' style='left:159px;top:271px;font-size:12.3px;color:#9a9a9a;'>아치형 창</div><svg style='left:500px;top:271px;' width='12' height='12' viewBox='0 0 12 12'><path d='M0.5 0.5L11.5 11.5M11.5 0.5L0.5 11.5' stroke='#7a7a7a' stroke-width='1.1'/></svg><div class='a' style='left:159px;top:296px;width:136px;height:240px;background:#000;'></div><svg style='left:-1px;top:-1px' width='1147' height='817'><path d='M196.0 522.7 L196.0 405.7 L196.0 405.7 L196.3 399.9 L197.2 393.9 L198.7 387.8 L200.7 381.7 L203.2 375.7 L206.3 369.8 L209.7 364.3 L213.5 359.2 L217.6 354.5 L221.9 350.4 L226.4 346.9 L231.0 344.1 L235.6 342.1 L240.1 340.8 L244.4 340.3 L248.5 340.6 L252.3 341.7 L255.7 343.6 L258.8 346.2 L261.3 349.6 L263.3 353.5 L264.8 358.1 L265.7 363.1 L266.0 368.6 L266.0 368.6 L266.0 485.6 L196.0 522.7' fill='none' stroke='#fff' stroke-width='1'/><path d='M202.0 517.5 L202.0 402.5 L202.0 402.5 L202.3 397.4 L203.0 392.1 L204.3 386.7 L206.0 381.4 L208.2 376.1 L210.8 371.0 L213.7 366.1 L217.0 361.6 L220.5 357.6 L224.2 354.0 L228.1 351.0 L232.0 348.6 L235.9 346.8 L239.8 345.8 L243.5 345.4 L247.0 345.7 L250.3 346.8 L253.2 348.5 L255.8 350.9 L258.0 353.8 L259.7 357.4 L261.0 361.4 L261.7 365.9 L262.0 370.7 L262.0 370.7 L262.0 485.7 L202.0 517.5' fill='none' stroke='#fff' stroke-width='1'/><path d='M205.0 512.9 L205.0 403.9 L259.0 375.3 L259.0 484.3 L205.0 512.9' fill='none' stroke='#fff' stroke-width='1'/><path d='M202.0 402.5 L262.0 370.7' fill='none' stroke='#fff' stroke-width='1'/><path d='M205.0 397.9 L259.0 369.3' fill='none' stroke='#fff' stroke-width='1'/><path d='M205.0 397.9 L205.2 393.5 L205.9 388.9 L207.1 384.2 L208.6 379.5 L210.6 374.9 L212.9 370.4 L215.6 366.1 L218.5 362.2 L221.7 358.6 L225.0 355.4 L228.5 352.8 L232.0 350.6 L235.5 349.0 L239.0 348.0 L242.3 347.6 L245.5 347.9 L248.4 348.7 L251.1 350.1 L253.4 352.2 L255.4 354.7 L256.9 357.8 L258.1 361.2 L258.8 365.1 L259.0 369.3' fill='none' stroke='#fff' stroke-width='1'/><path d='M230.0 499.7 L230.0 351.7' fill='none' stroke='#fff' stroke-width='1'/><path d='M234.0 497.5 L234.0 349.5' fill='none' stroke='#fff' stroke-width='1'/><path d='M205.0 460.9 L259.0 432.3' fill='none' stroke='#fff' stroke-width='1'/><path d='M205.0 456.9 L259.0 428.3' fill='none' stroke='#fff' stroke-width='1'/><path d='M233.5 382.8 L252.7 352.7' fill='none' stroke='#fff' stroke-width='1'/><path d='M235.8 381.6 L255.7 353.1' fill='none' stroke='#fff' stroke-width='1'/><path d='M230.5 384.4 L211.3 374.6' fill='none' stroke='#fff' stroke-width='1'/><path d='M228.2 385.6 L214.3 375.0' fill='none' stroke='#fff' stroke-width='1'/><path d='M206.5 511.1 L228.5 499.5' fill='none' stroke='#20e0f0' stroke-width='1'/><path d='M235.5 495.7 L257.5 484.1' fill='none' stroke='#20e0f0' stroke-width='1'/><path d='M228.5 499.5 L228.5 449.5' fill='none' stroke='#20e0f0' stroke-width='1'/><path d='M257.5 428.1 L257.5 377.1' fill='none' stroke='#20e0f0' stroke-width='1'/><path d='M206.5 395.1 L226.0 384.8' fill='none' stroke='#20e0f0' stroke-width='1'/><path d='M237.0 378.9 L257.0 368.4' fill='none' stroke='#20e0f0' stroke-width='1'/><path d='M229.0 380.2 L229.0 358.2' fill='none' stroke='#20e0f0' stroke-width='1'/><path d='M182.5 372.5 L182.5 522.5' fill='none' stroke='#22ee22' stroke-width='1'/><path d='M182.5 372.5 L230.0 346.0' fill='none' stroke='#22ee22' stroke-width='1'/><path d='M183.0 522.0 L202.0 512.0' fill='none' stroke='#22ee22' stroke-width='1'/><path d='M188.0 527.0 L214.0 513.0' fill='none' stroke='#22ee22' stroke-width='1'/><path d='M214.0 528.5 L283.0 489.5' fill='none' stroke='#22ee22' stroke-width='1'/><path d='M262.0 486.0 L284.0 496.0' fill='none' stroke='#22ee22' stroke-width='1'/><path d='M197.0 519.0 L216.0 531.0' fill='none' stroke='#22ee22' stroke-width='1'/><path d='M265.0 482.0 L282.0 473.0' fill='none' stroke='#22ee22' stroke-width='1'/><path d='M270.0 487.0 L283.0 480.0' fill='none' stroke='#22ee22' stroke-width='1'/></svg><div class='t' style='left:178px;top:444px;font-size:10px;color:#fff;font-weight:bold;background:#000'>B</div><div class='t' style='left:245px;top:500px;font-size:10px;color:#fff;font-weight:bold;background:#000'>A</div><div class='t' style='left:270px;top:461px;font-size:10px;color:#fff;font-weight:bold;background:#000'>C</div><div class='t' style='left:170px;top:517px;font-size:10px;color:#fff;font-weight:bold;background:#000'>D</div><div class='a' style='left:303px;top:302px;width:212px;height:79px;background:transparent;border:1px solid #dcdcdc'></div><div class='a' style='left:309px;top:295px;width:68px;height:14px;background:#f0f0f0;'></div><div class='t' style='left:311px;top:296px;font-size:12.3px;color:#1a1a1a;'>그려질 지점</div><svg style='left:311px;top:319px;' width='14' height='14' viewBox='0 0 14 14'><circle cx='6.5' cy='6.5' r='5.8' fill='#fff' stroke='#333' stroke-width='1'/></svg><div class='t' style='left:328px;top:319px;font-size:12.3px;color:#1a1a1a;'>두 점 사이</div><div class='t' style='left:394px;top:342px;font-size:12.3px;color:#1a1a1a;'>A: 길이:</div><div class='a' style='left:446px;top:340px;width:60px;height:18px;background:#fff;border:1px solid #7a7a7a;border-top-color:#5a5a5a'></div><div class='t' style='left:448px;top:342px;font-size:12.8px;color:#000;letter-spacing:-0.9px'>1000</div><svg style='left:311px;top:360px;' width='15' height='15' viewBox='0 0 15 15'><circle cx='7' cy='7' r='6.3' fill='#0a64c8'/><circle cx='7' cy='7' r='2.6' fill='#fff'/></svg><div class='t' style='left:328px;top:361px;font-size:12.3px;color:#1a1a1a;'>중심점</div><div class='t' style='left:303px;top:392px;font-size:12.3px;color:#1a1a1a;'>B: 높이:</div><div class='a' style='left:354px;top:390px;width:161px;height:18px;background:#fff;border:1px solid #7a7a7a;border-top-color:#5a5a5a'></div><div class='t' style='left:356px;top:392px;font-size:12.8px;color:#000;letter-spacing:-0.9px'>2000</div><div class='t' style='left:303px;top:422px;font-size:12.3px;color:#1a1a1a;'>C: 프레임 폭:</div><div class='a' style='left:384px;top:419px;width:131px;height:19px;background:#fff;border:1px solid #7a7a7a;border-top-color:#5a5a5a'></div><div class='t' style='left:386px;top:421px;font-size:12.8px;color:#000;letter-spacing:-0.9px'>40</div><div class='t' style='left:303px;top:452px;font-size:12.3px;color:#1a1a1a;'>D: 프레임 두께:</div><div class='a' style='left:395px;top:450px;width:120px;height:18px;background:#fff;border:1px solid #7a7a7a;border-top-color:#5a5a5a'></div><div class='t' style='left:397px;top:452px;font-size:12.8px;color:#000;letter-spacing:-0.9px'>80</div><div class='t' style='left:303px;top:482px;font-size:12.3px;color:#1a1a1a;'>유리 두께 (T):</div><div class='a' style='left:389px;top:480px;width:126px;height:18px;background:#fff;border:1px solid #7a7a7a;border-top-color:#5a5a5a'></div><div class='t' style='left:391px;top:482px;font-size:12.8px;color:#000;letter-spacing:-0.9px'>12</div><div class='t' style='left:303px;top:501px;font-size:12.3px;color:#1a1a1a;'>CYCAD FANTASMO</div><div class='a' style='left:378px;top:530px;width:62px;height:19px;background:#fdfdfd;border:1px solid #0a78d7;border-radius:4px'></div><div class='t' style='left:397px;top:533px;font-size:12.3px;color:#111;'>확인</div><div class='t' style='left:159px;top:547px;font-size:12.3px;color:#1a1a1a;'>그려질 높이:</div><div class='a' style='left:235px;top:545px;width:60px;height:18px;background:#fff;border:1px solid #7a7a7a;border-top-color:#5a5a5a'></div><div class='t' style='left:237px;top:547px;font-size:12.8px;color:#000;letter-spacing:-0.9px'>300</div><div class='a' style='left:555px;top:174px;width:330px;height:392px;background:#3b4353;'></div><svg style='left:-1px;top:-1px' width='1147' height='817'><path d='M571.0 208C571.0 194 578.0 187 586.0 187C595.0 187 601.0 194 601.5 205Z' fill='#2c5868' stroke='#b9b9b9' stroke-width='1.7'/><path d='M624.1 208C624.1 194 631.1 187 639.1 187C648.1 187 654.1 194 654.6 205Z' fill='#2c5868' stroke='#b9b9b9' stroke-width='1.7'/><path d='M639.1 187V206.5' stroke='#b9b9b9' stroke-width='1.2'/><path d='M677.2 208C677.2 194 684.2 187 692.2 187C701.2 187 707.2 194 707.7 205Z' fill='#2c5868' stroke='#b9b9b9' stroke-width='1.7'/><path d='M692.2 206.5L684.7 190.0' stroke='#b9b9b9' stroke-width='1.2'/><path d='M692.2 206.5L699.7 190.0' stroke='#b9b9b9' stroke-width='1.2'/><path d='M730.3 208C730.3 194 737.3 187 745.3 187C754.3 187 760.3 194 760.8 205Z' fill='#2c5868' stroke='#b9b9b9' stroke-width='1.7'/><path d='M745.3 206.5L734.7 193.1' stroke='#b9b9b9' stroke-width='1.2'/><path d='M745.3 206.5L745.3 187.5' stroke='#b9b9b9' stroke-width='1.2'/><path d='M745.3 206.5L755.9 193.1' stroke='#b9b9b9' stroke-width='1.2'/><path d='M783.4 208C783.4 194 790.4 187 798.4 187C807.4 187 813.4 194 813.9 205Z' fill='#2c5868' stroke='#b9b9b9' stroke-width='1.7'/><path d='M790.4 206.5C790.4 200 794.4 197 798.4 197C802.4 197 806.4 200 806.4 205.5' fill='none' stroke='#b9b9b9' stroke-width='1.2'/><path d='M798.4 187V197M785.4 196L792.4 201M811.4 195L804.4 200' stroke='#b9b9b9' stroke-width='1.2'/><path d='M836.5 208C836.5 194 843.5 187 851.5 187C860.5 187 866.5 194 867.0 205Z' fill='#2c5868' stroke='#b9b9b9' stroke-width='1.7'/><path d='M843.5 206.5C843.5 200 847.5 197 851.5 197C855.5 197 859.5 200 859.5 205.5' fill='none' stroke='#b9b9b9' stroke-width='1.2'/><path d='M851.5 187V206M838.5 196L845.5 201M864.5 195L857.5 200M851.5 206L845.5 199M851.5 206L857.5 199' stroke='#b9b9b9' stroke-width='1.1'/><path d='M580.6 287.0V263.5A6.4 7.5 0 0 1 593.4 263.5V286.3Z' fill='#2c5868' stroke='#b9b9b9' stroke-width='1.3'/><path d='M634.6 287.0V263.5A6.4 7.5 0 0 1 647.4 263.5V286.3Z' fill='#2c5868' stroke='#b9b9b9' stroke-width='1.3'/><path d='M634.6 263.5H647.4' stroke='#b9b9b9' stroke-width='1'/><path d='M688.6 287.0V263.5A6.4 7.5 0 0 1 701.4 263.5V286.3Z' fill='#2c5868' stroke='#b9b9b9' stroke-width='1.3'/><path d='M688.6 263.5H701.4' stroke='#b9b9b9' stroke-width='1'/><path d='M695.0 256.0V263.5' stroke='#b9b9b9' stroke-width='0.9'/><path d='M742.1 287.0V263.5A6.4 7.5 0 0 1 754.9 263.5V286.3Z' fill='#2c5868' stroke='#b9b9b9' stroke-width='1.3'/><path d='M742.1 263.5H754.9' stroke='#b9b9b9' stroke-width='1'/><path d='M748.5 263.5L744.0 258.2' stroke='#b9b9b9' stroke-width='0.9'/><path d='M748.5 263.5L748.5 256.0' stroke='#b9b9b9' stroke-width='0.9'/><path d='M748.5 263.5L753.0 258.2' stroke='#b9b9b9' stroke-width='0.9'/><path d='M795.6 287.0V263.5A6.4 7.5 0 0 1 808.4 263.5V286.3Z' fill='#2c5868' stroke='#b9b9b9' stroke-width='1.3'/><path d='M795.6 263.5H808.4' stroke='#b9b9b9' stroke-width='1'/><path d='M802.0 263.5L796.5 259.8' stroke='#b9b9b9' stroke-width='0.9'/><path d='M802.0 263.5L798.8 257.0' stroke='#b9b9b9' stroke-width='0.9'/><path d='M802.0 263.5L802.0 256.0' stroke='#b9b9b9' stroke-width='0.9'/><path d='M802.0 263.5L805.2 257.0' stroke='#b9b9b9' stroke-width='0.9'/><path d='M802.0 263.5L807.5 259.8' stroke='#b9b9b9' stroke-width='0.9'/><path d='M849.6 287.0V263.5A6.4 7.5 0 0 1 862.4 263.5V286.3Z' fill='#2c5868' stroke='#b9b9b9' stroke-width='1.3'/><path d='M849.6 263.5H862.4' stroke='#b9b9b9' stroke-width='1'/><path d='M856.0 263.5V287.0' stroke='#b9b9b9' stroke-width='1'/><path d='M580.6 361.0V337.5A6.4 7.5 0 0 1 593.4 337.5V360.3Z' fill='#2c5868' stroke='#b9b9b9' stroke-width='1.3'/><path d='M580.6 337.5H593.4' stroke='#b9b9b9' stroke-width='1'/><path d='M587.0 337.5V361.0' stroke='#b9b9b9' stroke-width='1'/><path d='M587.0 330.0V337.5' stroke='#b9b9b9' stroke-width='0.9'/><path d='M634.6 361.0V337.5A6.4 7.5 0 0 1 647.4 337.5V360.3Z' fill='#2c5868' stroke='#b9b9b9' stroke-width='1.3'/><path d='M634.6 337.5H647.4' stroke='#b9b9b9' stroke-width='1'/><path d='M641.0 337.5V361.0' stroke='#b9b9b9' stroke-width='1'/><path d='M641.0 337.5L637.8 331.0' stroke='#b9b9b9' stroke-width='0.9'/><path d='M641.0 337.5L644.2 331.0' stroke='#b9b9b9' stroke-width='0.9'/><path d='M688.6 361.0V337.5A6.4 7.5 0 0 1 701.4 337.5V360.3Z' fill='#2c5868' stroke='#b9b9b9' stroke-width='1.3'/><path d='M688.6 337.5H701.4' stroke='#b9b9b9' stroke-width='1'/><path d='M695.0 337.5V361.0' stroke='#b9b9b9' stroke-width='1'/><path d='M695.0 337.5L690.5 332.2' stroke='#b9b9b9' stroke-width='0.9'/><path d='M695.0 337.5L695.0 330.0' stroke='#b9b9b9' stroke-width='0.9'/><path d='M695.0 337.5L699.5 332.2' stroke='#b9b9b9' stroke-width='0.9'/><path d='M742.1 361.0V337.5A6.4 7.5 0 0 1 754.9 337.5V360.3Z' fill='#2c5868' stroke='#b9b9b9' stroke-width='1.3'/><path d='M742.1 337.5H754.9' stroke='#b9b9b9' stroke-width='1'/><path d='M748.5 337.5V361.0' stroke='#b9b9b9' stroke-width='1'/><path d='M742.1 349.2H754.9' stroke='#b9b9b9' stroke-width='0.9'/><path d='M795.6 361.0V337.5A6.4 7.5 0 0 1 808.4 337.5V360.3Z' fill='#2c5868' stroke='#b9b9b9' stroke-width='1.3'/><path d='M795.6 337.5H808.4' stroke='#b9b9b9' stroke-width='1'/><path d='M802.0 337.5V361.0' stroke='#b9b9b9' stroke-width='1'/><path d='M795.6 349.2H808.4' stroke='#b9b9b9' stroke-width='0.9'/><path d='M802.0 330.0V337.5' stroke='#b9b9b9' stroke-width='0.9'/><path d='M849.6 361.0V337.5A6.4 7.5 0 0 1 862.4 337.5V360.3Z' fill='#2c5868' stroke='#b9b9b9' stroke-width='1.3'/><path d='M849.6 337.5H862.4' stroke='#b9b9b9' stroke-width='1'/><path d='M856.0 337.5V361.0' stroke='#b9b9b9' stroke-width='1'/><path d='M849.6 349.2H862.4' stroke='#b9b9b9' stroke-width='0.9'/><path d='M856.0 337.5L851.5 332.2' stroke='#b9b9b9' stroke-width='0.9'/><path d='M856.0 337.5L856.0 330.0' stroke='#b9b9b9' stroke-width='0.9'/><path d='M856.0 337.5L860.5 332.2' stroke='#b9b9b9' stroke-width='0.9'/><path d='M580.6 435.0V411.5A6.4 7.5 0 0 1 593.4 411.5V434.3Z' fill='#2c5868' stroke='#b9b9b9' stroke-width='1.3'/><path d='M580.6 411.5H593.4' stroke='#b9b9b9' stroke-width='1'/><path d='M587.0 411.5V435.0' stroke='#b9b9b9' stroke-width='1'/><path d='M580.6 423.2H593.4' stroke='#b9b9b9' stroke-width='0.9'/><path d='M587.0 411.5L581.5 407.8' stroke='#b9b9b9' stroke-width='0.9'/><path d='M587.0 411.5L583.8 405.0' stroke='#b9b9b9' stroke-width='0.9'/><path d='M587.0 411.5L587.0 404.0' stroke='#b9b9b9' stroke-width='0.9'/><path d='M587.0 411.5L590.2 405.0' stroke='#b9b9b9' stroke-width='0.9'/><path d='M587.0 411.5L592.5 407.8' stroke='#b9b9b9' stroke-width='0.9'/><path d='M634.6 435.0V411.5A6.4 7.5 0 0 1 647.4 411.5V434.3Z' fill='#2c5868' stroke='#b9b9b9' stroke-width='1.3'/><path d='M634.6 411.5H647.4' stroke='#b9b9b9' stroke-width='1'/><path d='M641.0 411.5V435.0' stroke='#b9b9b9' stroke-width='1'/><path d='M634.6 419.3H647.4' stroke='#b9b9b9' stroke-width='0.9'/><path d='M634.6 427.2H647.4' stroke='#b9b9b9' stroke-width='0.9'/><path d='M688.6 435.0V411.5A6.4 7.5 0 0 1 701.4 411.5V434.3Z' fill='#2c5868' stroke='#b9b9b9' stroke-width='1.3'/><path d='M688.6 411.5H701.4' stroke='#b9b9b9' stroke-width='1'/><path d='M695.0 411.5V435.0' stroke='#b9b9b9' stroke-width='1'/><path d='M688.6 419.3H701.4' stroke='#b9b9b9' stroke-width='0.9'/><path d='M688.6 427.2H701.4' stroke='#b9b9b9' stroke-width='0.9'/><path d='M695.0 404.0V411.5' stroke='#b9b9b9' stroke-width='0.9'/><path d='M742.1 435.0V411.5A6.4 7.5 0 0 1 754.9 411.5V434.3Z' fill='#2c5868' stroke='#b9b9b9' stroke-width='1.3'/><path d='M742.1 411.5H754.9' stroke='#b9b9b9' stroke-width='1'/><path d='M748.5 411.5V435.0' stroke='#b9b9b9' stroke-width='1'/><path d='M742.1 419.3H754.9' stroke='#b9b9b9' stroke-width='0.9'/><path d='M742.1 427.2H754.9' stroke='#b9b9b9' stroke-width='0.9'/><path d='M748.5 411.5L744.0 406.2' stroke='#b9b9b9' stroke-width='0.9'/><path d='M748.5 411.5L748.5 404.0' stroke='#b9b9b9' stroke-width='0.9'/><path d='M748.5 411.5L753.0 406.2' stroke='#b9b9b9' stroke-width='0.9'/><path d='M795.6 435.0V411.5A6.4 7.5 0 0 1 808.4 411.5V434.3Z' fill='#2c5868' stroke='#b9b9b9' stroke-width='1.3'/><path d='M795.6 411.5H808.4' stroke='#b9b9b9' stroke-width='1'/><path d='M802.0 411.5V435.0' stroke='#b9b9b9' stroke-width='1'/><path d='M795.6 419.3H808.4' stroke='#b9b9b9' stroke-width='0.9'/><path d='M795.6 427.2H808.4' stroke='#b9b9b9' stroke-width='0.9'/><path d='M802.0 411.5L796.5 407.8' stroke='#b9b9b9' stroke-width='0.9'/><path d='M802.0 411.5L798.8 405.0' stroke='#b9b9b9' stroke-width='0.9'/><path d='M802.0 411.5L802.0 404.0' stroke='#b9b9b9' stroke-width='0.9'/><path d='M802.0 411.5L805.2 405.0' stroke='#b9b9b9' stroke-width='0.9'/><path d='M802.0 411.5L807.5 407.8' stroke='#b9b9b9' stroke-width='0.9'/><path d='M849.6 435.0V411.5A6.4 7.5 0 0 1 862.4 411.5V434.3Z' fill='#2c5868' stroke='#b9b9b9' stroke-width='1.3'/><path d='M849.6 411.5H862.4' stroke='#b9b9b9' stroke-width='1'/><path d='M856.0 411.5V435.0' stroke='#b9b9b9' stroke-width='1'/><path d='M849.6 417.4H862.4' stroke='#b9b9b9' stroke-width='0.9'/><path d='M849.6 423.2H862.4' stroke='#b9b9b9' stroke-width='0.9'/><path d='M849.6 429.1H862.4' stroke='#b9b9b9' stroke-width='0.9'/><path d='M580.6 509.0V485.5A6.4 7.5 0 0 1 593.4 485.5V508.3Z' fill='#2c5868' stroke='#b9b9b9' stroke-width='1.3'/><path d='M580.6 485.5H593.4' stroke='#b9b9b9' stroke-width='1'/><path d='M587.0 485.5V509.0' stroke='#b9b9b9' stroke-width='1'/><path d='M580.6 491.4H593.4' stroke='#b9b9b9' stroke-width='0.9'/><path d='M580.6 497.2H593.4' stroke='#b9b9b9' stroke-width='0.9'/><path d='M580.6 503.1H593.4' stroke='#b9b9b9' stroke-width='0.9'/><path d='M587.0 478.0V485.5' stroke='#b9b9b9' stroke-width='0.9'/><path d='M634.6 509.0V485.5A6.4 7.5 0 0 1 647.4 485.5V508.3Z' fill='#2c5868' stroke='#b9b9b9' stroke-width='1.3'/><path d='M634.6 485.5H647.4' stroke='#b9b9b9' stroke-width='1'/><path d='M641.0 485.5V509.0' stroke='#b9b9b9' stroke-width='1'/><path d='M634.6 491.4H647.4' stroke='#b9b9b9' stroke-width='0.9'/><path d='M634.6 497.2H647.4' stroke='#b9b9b9' stroke-width='0.9'/><path d='M634.6 503.1H647.4' stroke='#b9b9b9' stroke-width='0.9'/><path d='M641.0 485.5L636.5 480.2' stroke='#b9b9b9' stroke-width='0.9'/><path d='M641.0 485.5L641.0 478.0' stroke='#b9b9b9' stroke-width='0.9'/><path d='M641.0 485.5L645.5 480.2' stroke='#b9b9b9' stroke-width='0.9'/><path d='M688.6 509.0V485.5A6.4 7.5 0 0 1 701.4 485.5V508.3Z' fill='#2c5868' stroke='#b9b9b9' stroke-width='1.3'/><path d='M688.6 485.5H701.4' stroke='#b9b9b9' stroke-width='1'/><path d='M695.0 485.5V509.0' stroke='#b9b9b9' stroke-width='1'/><path d='M688.6 491.4H701.4' stroke='#b9b9b9' stroke-width='0.9'/><path d='M688.6 497.2H701.4' stroke='#b9b9b9' stroke-width='0.9'/><path d='M688.6 503.1H701.4' stroke='#b9b9b9' stroke-width='0.9'/><path d='M695.0 485.5L689.5 481.8' stroke='#b9b9b9' stroke-width='0.9'/><path d='M695.0 485.5L691.8 479.0' stroke='#b9b9b9' stroke-width='0.9'/><path d='M695.0 485.5L695.0 478.0' stroke='#b9b9b9' stroke-width='0.9'/><path d='M695.0 485.5L698.2 479.0' stroke='#b9b9b9' stroke-width='0.9'/><path d='M695.0 485.5L700.5 481.8' stroke='#b9b9b9' stroke-width='0.9'/></svg><div class='t' style='left:562px;top:217px;font-size:12.3px;color:#ececec;'>아치창 1</div><div class='t' style='left:615px;top:217px;font-size:12.3px;color:#ececec;'>아치창 2</div><div class='t' style='left:668px;top:217px;font-size:12.3px;color:#ececec;'>아치창 3</div><div class='t' style='left:721px;top:217px;font-size:12.3px;color:#ececec;'>아치창 4</div><div class='t' style='left:774px;top:217px;font-size:12.3px;color:#ececec;'>아치창 5</div><div class='t' style='left:827px;top:217px;font-size:12.3px;color:#ececec;'>아치창 6</div><div class='t' style='left:561px;top:291px;font-size:12.3px;color:#ececec;'>아치형창</div><div class='t' style='left:615px;top:291px;font-size:12.3px;color:#ececec;'>아치형창</div><div class='t' style='left:669px;top:291px;font-size:12.3px;color:#ececec;'>아치형창</div><div class='t' style='left:723px;top:291px;font-size:12.3px;color:#ececec;'>아치형창</div><div class='t' style='left:776px;top:291px;font-size:12.3px;color:#ececec;'>아치형창</div><div class='t' style='left:830px;top:291px;font-size:12.3px;color:#ececec;'>아치형창</div><div class='t' style='left:561px;top:365px;font-size:12.3px;color:#ececec;'>아치형창</div><div class='t' style='left:615px;top:365px;font-size:12.3px;color:#ececec;'>아치형창</div><div class='t' style='left:669px;top:365px;font-size:12.3px;color:#ececec;'>아치형창</div><div class='t' style='left:723px;top:365px;font-size:12.3px;color:#ececec;'>아치형창</div><div class='t' style='left:776px;top:365px;font-size:12.3px;color:#ececec;'>아치형창</div><div class='t' style='left:830px;top:365px;font-size:12.3px;color:#ececec;'>아치형창</div><div class='t' style='left:561px;top:439px;font-size:12.3px;color:#ececec;'>아치형창</div><div class='t' style='left:615px;top:439px;font-size:12.3px;color:#ececec;'>아치형창</div><div class='t' style='left:669px;top:439px;font-size:12.3px;color:#ececec;'>아치형창</div><div class='t' style='left:723px;top:439px;font-size:12.3px;color:#ececec;'>아치형창</div><div class='t' style='left:776px;top:439px;font-size:12.3px;color:#ececec;'>아치형창</div><div class='t' style='left:830px;top:439px;font-size:12.3px;color:#ececec;'>아치형창</div><div class='t' style='left:561px;top:513px;font-size:12.3px;color:#ececec;'>아치형창</div><div class='t' style='left:615px;top:513px;font-size:12.3px;color:#ececec;'>아치형창</div><div class='t' style='left:669px;top:513px;font-size:12.3px;color:#ececec;'>아치형창</div><svg style='left:557px;top:548px;' width='16' height='16' viewBox='0 0 16 16'><rect x='0.5' y='0.5' width='15' height='15' fill='#4c5a70' stroke='#6aaee8' stroke-width='1'/><circle cx='7.5' cy='8.5' r='4.5' fill='#e8e8e8'/><circle cx='10' cy='6.5' r='3.3' fill='#4c5a70'/></svg><div class='t' style='left:696px;top:549px;font-size:12.3px;color:#ececec;'>아치형 창</div><div class='a' style='left:529px;top:423px;width:43px;height:2px;background:#16a0a0;'></div><svg style='left:7px;top:725px;' width='20' height='6' viewBox='0 0 20 6'><rect x='0.0' y='0.0' width='2' height='2' fill='#e8e8e8'/><rect x='3.2' y='0.0' width='2' height='2' fill='#e8e8e8'/><rect x='6.4' y='0.0' width='2' height='2' fill='#e8e8e8'/><rect x='9.6' y='0.0' width='2' height='2' fill='#e8e8e8'/><rect x='12.8' y='0.0' width='2' height='2' fill='#e8e8e8'/><rect x='16.0' y='0.0' width='2' height='2' fill='#e8e8e8'/><rect x='0.0' y='3.0' width='2' height='2' fill='#e8e8e8'/><rect x='3.2' y='3.0' width='2' height='2' fill='#e8e8e8'/><rect x='6.4' y='3.0' width='2' height='2' fill='#e8e8e8'/><rect x='9.6' y='3.0' width='2' height='2' fill='#e8e8e8'/><rect x='12.8' y='3.0' width='2' height='2' fill='#e8e8e8'/><rect x='16.0' y='3.0' width='2' height='2' fill='#e8e8e8'/></svg><svg style='left:10px;top:738px;' width='10' height='10' viewBox='0 0 10 10'><path d='M1 1L9 9M9 1L1 9' stroke='#d8d8d8' stroke-width='1.5'/></svg><svg style='left:6px;top:759px;' width='17' height='17' viewBox='0 0 17 17'><path d='M2.5 14.5L10 7' stroke='#c8c8c8' stroke-width='2.6' stroke-linecap='round'/><path d='M9 8C8 5 9.5 2 13 1.5L11.5 4L13 5.5L15.5 4C15.5 7.5 12.5 9.5 9.5 8.5Z' fill='#c8c8c8' stroke='#c8c8c8' stroke-width='1.2'/></svg><div class='t' style='left:30px;top:728px;font-size:12px;color:#000;font-family:"Liberation Mono",monospace;letter-spacing:-0.12px'>C:\Users\jeffy\AppData\Local\Temp\Drawing1_1_29790_17fcef6a.sv$(으)로 자동 저장 ...</div><div class='t' style='left:30px;top:741px;font-size:12px;color:#000;font-family:"Liberation Mono",monospace'>명령:</div><svg style='left:32px;top:761px;' width='17' height='13' viewBox='0 0 17 13'><rect x='0.5' y='0.5' width='16' height='12' fill='#fff' stroke='#555' stroke-width='1'/><rect x='0.5' y='0.5' width='16' height='2' fill='#555'/><path d='M3 5L5.5 7L3 9M6.5 9.5H10' fill='none' stroke='#444' stroke-width='0.9'/></svg><svg style='left:51.0px;top:765.0px;' width='7' height='4' viewBox='0 0 7 4'><path d='M0 0H7L3.5 4Z' fill='#666'/></svg><div class='t' style='left:65px;top:761px;font-size:12px;color:#8a8a8a;font-style:italic;letter-spacing:1.5px'>명령 입력</div><div class='a' style='left:19px;top:789px;width:16px;height:2px;background:#ececec;'></div><div class='a' style='left:19px;top:794px;width:16px;height:2px;background:#ececec;'></div><div class='a' style='left:19px;top:799px;width:16px;height:2px;background:#ececec;'></div><svg style='left:43px;top:783px;' width='59' height='25' viewBox='0 0 59 25'><path d='M0.5 24.5L9 0.5H58L50 24.5Z' fill='#3b4353'/></svg><div class='t' style='left:61px;top:789px;font-size:12.3px;color:#f0f0f0;'>모형</div><div class='t' style='left:109px;top:789px;font-size:12.3px;color:#e0e0e0;'>배치1</div><svg style='left:149px;top:786px;' width='9' height='18' viewBox='0 0 9 18'><path d='M1 17L8 1' stroke='#5a606a' stroke-width='1.2'/></svg><div class='t' style='left:164px;top:789px;font-size:12.3px;color:#e0e0e0;'>배치2</div><svg style='left:204px;top:786px;' width='9' height='18' viewBox='0 0 9 18'><path d='M1 17L8 1' stroke='#5a606a' stroke-width='1.2'/></svg><svg style='left:220px;top:788px;' width='16' height='16' viewBox='0 0 16 16'><path d='M8 1V15M1 8H15' stroke='#f0f0f0' stroke-width='1.8'/></svg><svg style='left:245px;top:786px;' width='9' height='18' viewBox='0 0 9 18'><path d='M1 17L8 1' stroke='#5a606a' stroke-width='1.2'/></svg><div class='a' style='left:541px;top:785px;width:94px;height:24px;background:#3b4353;'></div><div class='a' style='left:638px;top:785px;width:103px;height:24px;background:#3b4353;'></div><div class='a' style='left:744px;top:785px;width:63px;height:24px;background:#3b4353;'></div><div class='a' style='left:810px;top:785px;width:106px;height:24px;background:#3b4353;'></div><div class='a' style='left:919px;top:785px;width:82px;height:24px;background:#3b4353;'></div><div class='a' style='left:1003px;top:785px;width:24px;height:24px;background:#3b4353;'></div><div class='a' style='left:1030px;top:785px;width:25px;height:24px;background:#3b4353;'></div><div class='a' style='left:1057px;top:785px;width:30px;height:24px;background:#3b4353;'></div><div class='a' style='left:1090px;top:785px;width:24px;height:24px;background:#3b4353;'></div><div class='a' style='left:1116px;top:785px;width:25px;height:24px;background:#3b4353;'></div><div class='t' style='left:543px;top:789px;font-size:12.3px;color:#f0f0f0;'>모형</div><div class='a' style='left:572px;top:785px;width:22px;height:24px;background:#5a88c0;'></div><div class='a' style='left:596px;top:785px;width:22px;height:24px;background:#5a88c0;'></div><svg style='left:575px;top:789px;' width='16' height='16' viewBox='0 0 16 16'><path d='M5 1V15M11 1V15M1 5H15M1 11H15' stroke='#fff' stroke-width='1.4'/></svg><svg style='left:599px;top:790px;' width='16' height='14' viewBox='0 0 16 14'><rect x='1.0' y='1.0' width='2' height='2' fill='#fff'/><rect x='5.5' y='1.0' width='2' height='2' fill='#fff'/><rect x='10.0' y='1.0' width='2' height='2' fill='#fff'/><rect x='1.0' y='5.5' width='2' height='2' fill='#fff'/><rect x='5.5' y='5.5' width='2' height='2' fill='#fff'/><rect x='10.0' y='5.5' width='2' height='2' fill='#fff'/><rect x='1.0' y='10.0' width='2' height='2' fill='#fff'/><rect x='5.5' y='10.0' width='2' height='2' fill='#fff'/><rect x='10.0' y='10.0' width='2' height='2' fill='#fff'/></svg><svg style='left:623.0px;top:795.0px;' width='7' height='4' viewBox='0 0 7 4'><path d='M0 0H7L3.5 4Z' fill='#d8d8d8'/></svg><div class='a' style='left:639px;top:785px;width:22px;height:24px;background:#5a88c0;'></div><svg style='left:642px;top:788px;' width='16' height='17' viewBox='0 0 16 17'><path d='M2 1V15H15M2 11H6V15' fill='none' stroke='#fff' stroke-width='1.4'/></svg><svg style='left:666px;top:788px;' width='20' height='17' viewBox='0 0 20 17'><circle cx='8' cy='10' r='6' fill='none' stroke='#e0e0e0' stroke-width='1.3'/><path d='M8 10L16 2M8 10H16' stroke='#e0e0e0' stroke-width='1.3'/></svg><svg style='left:690.0px;top:795.0px;' width='7' height='4' viewBox='0 0 7 4'><path d='M0 0H7L3.5 4Z' fill='#d8d8d8'/></svg><svg style='left:706px;top:787px;' width='17' height='19' viewBox='0 0 17 19'><path d='M2 2L15 17' stroke='#e03030' stroke-width='1.3'/><path d='M8.5 1V18' stroke='#30c030' stroke-width='1.3'/><circle cx='8.5' cy='9.5' r='1.6' fill='#fff'/></svg><svg style='left:731.0px;top:795.0px;' width='7' height='4' viewBox='0 0 7 4'><path d='M0 0H7L3.5 4Z' fill='#d8d8d8'/></svg><div class='a' style='left:744px;top:785px;width:22px;height:24px;background:#5a88c0;'></div><svg style='left:746px;top:788px;' width='17' height='17' viewBox='0 0 17 17'><path d='M2 15H15M2 15L13 5' stroke='#fff' stroke-width='1.4'/></svg><svg style='left:770px;top:787px;' width='21' height='20' viewBox='0 0 21 20'><rect x='4' y='5' width='15' height='14' fill='none' stroke='#e0e0e0' stroke-width='1.3'/><rect x='1' y='1.5' width='5' height='5' fill='#3b4353' stroke='#f0a060' stroke-width='1.2'/></svg><svg style='left:795.0px;top:795.0px;' width='7' height='4' viewBox='0 0 7 4'><path d='M0 0H7L3.5 4Z' fill='#d8d8d8'/></svg><div class='a' style='left:811px;top:785px;width:22px;height:24px;background:#5a88c0;'></div><svg style='left:812px;top:787px;' width='21' height='20' viewBox='0 0 21 20'><path d='M10 2L4 18L10 13L16 18Z' fill='#fff'/><circle cx='16' cy='5' r='3' fill='none' stroke='#fff' stroke-width='1.3'/></svg><svg style='left:837px;top:787px;' width='18' height='20' viewBox='0 0 18 20'><path d='M8 2L2 18L8 13L14 18Z' fill='#d8d8d8'/><path d='M13 1L11 6H14L12 10' fill='none' stroke='#d8d8d8' stroke-width='1.2'/></svg><svg style='left:862px;top:787px;' width='17' height='20' viewBox='0 0 17 20'><path d='M8.5 2L2 18L8.5 13L15 18Z' fill='#d8d8d8'/></svg><div class='t' style='left:887px;top:790px;font-size:12.3px;color:#e8e8e8;letter-spacing:-0.8px'>1:1</div><svg style='left:905.0px;top:795.0px;' width='7' height='4' viewBox='0 0 7 4'><path d='M0 0H7L3.5 4Z' fill='#d8d8d8'/></svg><svg style='left:922px;top:788px;' width='19' height='19' viewBox='0 0 19 19'><circle cx='9.5' cy='9.5' r='6' fill='none' stroke='#d8d8d8' stroke-width='4'/><path d='M9.5 0.5V18.5M0.5 9.5H18.5M3 3L16 16M16 3L3 16' stroke='#d8d8d8' stroke-width='2.5'/><circle cx='9.5' cy='9.5' r='2.5' fill='#3b4353'/></svg><div class='t' style='left:948px;top:791px;font-size:11.2px;color:#f0f0f0;'>CYCAD</div><svg style='left:991.5px;top:796.0px;' width='7' height='4' viewBox='0 0 7 4'><path d='M0 0H7L3.5 4Z' fill='#d8d8d8'/></svg><svg style='left:1006px;top:788px;' width='18' height='18' viewBox='0 0 18 18'><path d='M9 0V18M0 9H18' stroke='#f0f0f0' stroke-width='2'/></svg><svg style='left:1032px;top:787px;' width='20' height='20' viewBox='0 0 20 20'><rect x='1' y='1' width='7' height='7' fill='none' stroke='#e0e0e0' stroke-width='1.2'/><circle cx='15' cy='9' r='3.5' fill='none' stroke='#e0e0e0' stroke-width='1.2'/><path d='M6 12L2 19H10Z' fill='none' stroke='#e0e0e0' stroke-width='1.2'/></svg><svg style='left:1061px;top:787px;' width='20' height='20' viewBox='0 0 20 20'><rect x='0.5' y='1' width='18' height='16' fill='#3b4353' stroke='#d8d8d8' stroke-width='1.2'/><path d='M2 10L7 4L11 11L16 5' fill='none' stroke='#8ac8f0' stroke-width='1.2'/><path d='M13 9L19 19H7Z' fill='#f09030'/><path d='M13 12V15' stroke='#fff' stroke-width='1.2'/></svg><svg style='left:1092px;top:789px;' width='19' height='17' viewBox='0 0 19 17'><rect x='0.7' y='0.7' width='17' height='15' fill='none' stroke='#e0e0e0' stroke-width='1.3'/><path d='M4 12L8 8M4 12V9M4 12H7M14 4L10 8M14 4V7M14 4H11' fill='none' stroke='#e0e0e0' stroke-width='1.2'/></svg><div class='a' style='left:1118px;top:790px;width:18px;height:2px;background:#ececec;'></div><div class='a' style='left:1118px;top:796px;width:18px;height:2px;background:#ececec;'></div><div class='a' style='left:1118px;top:802px;width:18px;height:2px;background:#ececec;'></div></div></body></html>
